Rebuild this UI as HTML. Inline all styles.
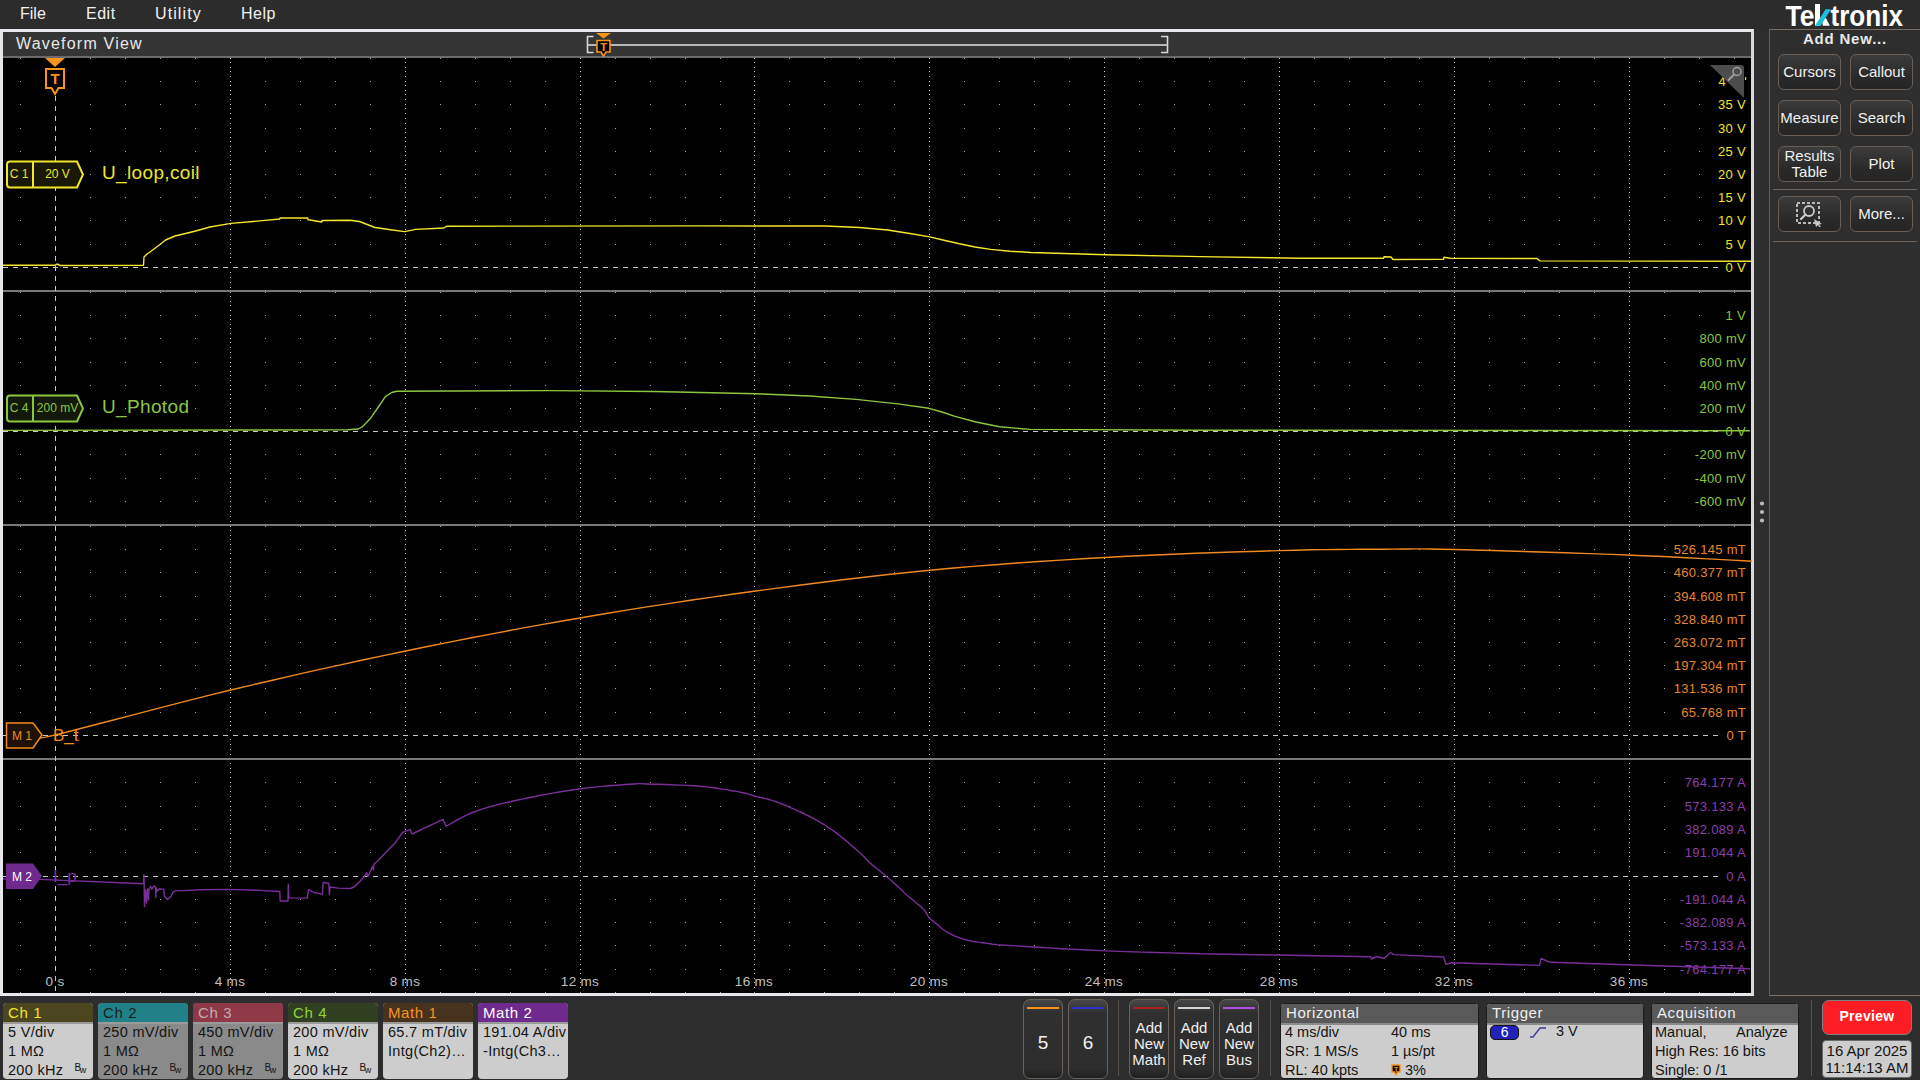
<!DOCTYPE html><html><head><meta charset="utf-8"><title>Tektronix</title><style>
*{margin:0;padding:0;box-sizing:border-box}
html,body{width:1920px;height:1080px;overflow:hidden;background:#2d2d2d;font-family:"Liberation Sans", sans-serif}
.a{position:absolute}
.menu{left:0;top:0;width:1920px;height:29px;background:#2c2c2c}
.mi{position:absolute;top:4px;font-size:16px;color:#f2f2f2;line-height:20px}
.win{left:0;top:29px;width:1754px;height:967px;border:3px solid #e8e8ec;border-right-color:#d8d8dc;background:#000}
.title{left:3px;top:32px;width:1748px;height:24px;background:#353535}
.tline{left:3px;top:56px;width:1748px;height:2px;background:#6b6b6b}
.panel{left:1769px;top:29px;width:151px;height:967px;background:#2e2e2e;border-left:1px solid #5e5e5e;border-top:1px solid #7a6e64;border-bottom:1px solid #7a6e64}
.btn{position:absolute;width:63px;height:36px;border:1px solid #6a5e54;border-radius:6px;background:linear-gradient(#3c3c3c,#2a2a2a 60%,#252525);color:#f0f0f0;font-size:15px;text-align:center;display:flex;align-items:center;justify-content:center;line-height:16px}
.sep{position:absolute;height:1px;background:#6e645c}
.bd{position:absolute;top:1003px;height:76px;border-radius:4px;overflow:hidden;background:#cdcdcd}
.bd .h{height:21px;font-size:15px;line-height:19px;padding-left:5px;border-bottom:2px solid #9a9a9a;letter-spacing:0.6px}
.ib .r{letter-spacing:0 !important}
.bd .r{font-size:14.5px;color:#141414;line-height:19px;padding-left:5px;white-space:nowrap;letter-spacing:0.3px;position:relative;top:-1px}
.sb{position:absolute;top:999px;width:40px;height:80px;border:1px solid #6a625a;border-radius:7px;background:linear-gradient(#474747 0,#2f2f2f 13px,#2d2d2d 88%,#1f1f1f 100%);color:#f0f0f0;text-align:center}
</style></head><body><div class="a menu"><span class="mi" style="left:20px">File</span><span class="mi" style="left:86px;letter-spacing:0.5px">Edit</span><span class="mi" style="left:155px;letter-spacing:1.1px">Utility</span><span class="mi" style="left:241px;letter-spacing:0.5px">Help</span></div><div class="a win"></div><div class="a title"></div><div class="a tline"></div><div class="a" style="left:16px;top:34px;font-size:16px;color:#e8e8e8;line-height:20px;letter-spacing:1.2px">Waveform View</div><svg class="a" style="left:0;top:0" width="1920" height="60"><path d="M593.5 36.5 H587.5 V52.5 H593.5" fill="none" stroke="#d8d8d8" stroke-width="1.6"/><path d="M1161 36.5 H1167.5 V52.5 H1161" fill="none" stroke="#d8d8d8" stroke-width="1.6"/><rect x="588" y="44" width="579" height="2" fill="#b8b8b8"/><path d="M596 33 H611 L603.5 38.5 Z" fill="#f7931e"/><path d="M597 40.5 H610 V52 H606 L603.5 56 L601 52 H597 Z" fill="#000" stroke="#f7931e" stroke-width="1.6"/><text x="603.5" y="50.5" fill="#f7931e" font-family='"Liberation Sans", sans-serif' font-size="11" font-weight="bold" text-anchor="middle">T</text></svg><svg width="1920" height="1080" style="position:absolute;left:0;top:0"><rect x="3" y="58" width="1748" height="935" fill="#000"/><path fill="#a8a8a8" d="M20 58h1v1h-1zM55 58h1v1h-1zM90 58h1v1h-1zM125 58h1v1h-1zM160 58h1v1h-1zM195 58h1v1h-1zM230 58h1v1h-1zM265 58h1v1h-1zM300 58h1v1h-1zM335 58h1v1h-1zM370 58h1v1h-1zM405 58h1v1h-1zM440 58h1v1h-1zM475 58h1v1h-1zM510 58h1v1h-1zM545 58h1v1h-1zM580 58h1v1h-1zM615 58h1v1h-1zM650 58h1v1h-1zM685 58h1v1h-1zM720 58h1v1h-1zM754 58h1v1h-1zM789 58h1v1h-1zM824 58h1v1h-1zM859 58h1v1h-1zM894 58h1v1h-1zM929 58h1v1h-1zM964 58h1v1h-1zM999 58h1v1h-1zM1034 58h1v1h-1zM1069 58h1v1h-1zM1104 58h1v1h-1zM1139 58h1v1h-1zM1174 58h1v1h-1zM1209 58h1v1h-1zM1244 58h1v1h-1zM1279 58h1v1h-1zM1314 58h1v1h-1zM1349 58h1v1h-1zM1384 58h1v1h-1zM1419 58h1v1h-1zM1454 58h1v1h-1zM1489 58h1v1h-1zM1524 58h1v1h-1zM1559 58h1v1h-1zM1594 58h1v1h-1zM1629 58h1v1h-1zM1664 58h1v1h-1zM1699 58h1v1h-1zM1734 58h1v1h-1zM20 81h1v1h-1zM55 81h1v1h-1zM90 81h1v1h-1zM125 81h1v1h-1zM160 81h1v1h-1zM195 81h1v1h-1zM230 81h1v1h-1zM265 81h1v1h-1zM300 81h1v1h-1zM335 81h1v1h-1zM370 81h1v1h-1zM405 81h1v1h-1zM440 81h1v1h-1zM475 81h1v1h-1zM510 81h1v1h-1zM545 81h1v1h-1zM580 81h1v1h-1zM615 81h1v1h-1zM650 81h1v1h-1zM685 81h1v1h-1zM720 81h1v1h-1zM754 81h1v1h-1zM789 81h1v1h-1zM824 81h1v1h-1zM859 81h1v1h-1zM894 81h1v1h-1zM929 81h1v1h-1zM964 81h1v1h-1zM999 81h1v1h-1zM1034 81h1v1h-1zM1069 81h1v1h-1zM1104 81h1v1h-1zM1139 81h1v1h-1zM1174 81h1v1h-1zM1209 81h1v1h-1zM1244 81h1v1h-1zM1279 81h1v1h-1zM1314 81h1v1h-1zM1349 81h1v1h-1zM1384 81h1v1h-1zM1419 81h1v1h-1zM1454 81h1v1h-1zM1489 81h1v1h-1zM1524 81h1v1h-1zM1559 81h1v1h-1zM1594 81h1v1h-1zM1629 81h1v1h-1zM1664 81h1v1h-1zM1699 81h1v1h-1zM1734 81h1v1h-1zM20 104h1v1h-1zM90 104h1v1h-1zM125 104h1v1h-1zM160 104h1v1h-1zM195 104h1v1h-1zM230 104h1v1h-1zM265 104h1v1h-1zM300 104h1v1h-1zM335 104h1v1h-1zM370 104h1v1h-1zM405 104h1v1h-1zM440 104h1v1h-1zM475 104h1v1h-1zM510 104h1v1h-1zM545 104h1v1h-1zM580 104h1v1h-1zM615 104h1v1h-1zM650 104h1v1h-1zM685 104h1v1h-1zM720 104h1v1h-1zM754 104h1v1h-1zM789 104h1v1h-1zM824 104h1v1h-1zM859 104h1v1h-1zM894 104h1v1h-1zM929 104h1v1h-1zM964 104h1v1h-1zM999 104h1v1h-1zM1034 104h1v1h-1zM1069 104h1v1h-1zM1104 104h1v1h-1zM1139 104h1v1h-1zM1174 104h1v1h-1zM1209 104h1v1h-1zM1244 104h1v1h-1zM1279 104h1v1h-1zM1314 104h1v1h-1zM1349 104h1v1h-1zM1384 104h1v1h-1zM1419 104h1v1h-1zM1454 104h1v1h-1zM1489 104h1v1h-1zM1524 104h1v1h-1zM1559 104h1v1h-1zM1594 104h1v1h-1zM1629 104h1v1h-1zM1664 104h1v1h-1zM1699 104h1v1h-1zM1734 104h1v1h-1zM20 128h1v1h-1zM90 128h1v1h-1zM125 128h1v1h-1zM160 128h1v1h-1zM195 128h1v1h-1zM230 128h1v1h-1zM265 128h1v1h-1zM300 128h1v1h-1zM335 128h1v1h-1zM370 128h1v1h-1zM405 128h1v1h-1zM440 128h1v1h-1zM475 128h1v1h-1zM510 128h1v1h-1zM545 128h1v1h-1zM580 128h1v1h-1zM615 128h1v1h-1zM650 128h1v1h-1zM685 128h1v1h-1zM720 128h1v1h-1zM754 128h1v1h-1zM789 128h1v1h-1zM824 128h1v1h-1zM859 128h1v1h-1zM894 128h1v1h-1zM929 128h1v1h-1zM964 128h1v1h-1zM999 128h1v1h-1zM1034 128h1v1h-1zM1069 128h1v1h-1zM1104 128h1v1h-1zM1139 128h1v1h-1zM1174 128h1v1h-1zM1209 128h1v1h-1zM1244 128h1v1h-1zM1279 128h1v1h-1zM1314 128h1v1h-1zM1349 128h1v1h-1zM1384 128h1v1h-1zM1419 128h1v1h-1zM1454 128h1v1h-1zM1489 128h1v1h-1zM1524 128h1v1h-1zM1559 128h1v1h-1zM1594 128h1v1h-1zM1629 128h1v1h-1zM1664 128h1v1h-1zM1699 128h1v1h-1zM1734 128h1v1h-1zM20 151h1v1h-1zM90 151h1v1h-1zM125 151h1v1h-1zM160 151h1v1h-1zM195 151h1v1h-1zM230 151h1v1h-1zM265 151h1v1h-1zM300 151h1v1h-1zM335 151h1v1h-1zM370 151h1v1h-1zM405 151h1v1h-1zM440 151h1v1h-1zM475 151h1v1h-1zM510 151h1v1h-1zM545 151h1v1h-1zM580 151h1v1h-1zM615 151h1v1h-1zM650 151h1v1h-1zM685 151h1v1h-1zM720 151h1v1h-1zM754 151h1v1h-1zM789 151h1v1h-1zM824 151h1v1h-1zM859 151h1v1h-1zM894 151h1v1h-1zM929 151h1v1h-1zM964 151h1v1h-1zM999 151h1v1h-1zM1034 151h1v1h-1zM1069 151h1v1h-1zM1104 151h1v1h-1zM1139 151h1v1h-1zM1174 151h1v1h-1zM1209 151h1v1h-1zM1244 151h1v1h-1zM1279 151h1v1h-1zM1314 151h1v1h-1zM1349 151h1v1h-1zM1384 151h1v1h-1zM1419 151h1v1h-1zM1454 151h1v1h-1zM1489 151h1v1h-1zM1524 151h1v1h-1zM1559 151h1v1h-1zM1594 151h1v1h-1zM1629 151h1v1h-1zM1664 151h1v1h-1zM1699 151h1v1h-1zM1734 151h1v1h-1zM20 174h1v1h-1zM90 174h1v1h-1zM125 174h1v1h-1zM160 174h1v1h-1zM195 174h1v1h-1zM230 174h1v1h-1zM265 174h1v1h-1zM300 174h1v1h-1zM335 174h1v1h-1zM370 174h1v1h-1zM405 174h1v1h-1zM440 174h1v1h-1zM475 174h1v1h-1zM510 174h1v1h-1zM545 174h1v1h-1zM580 174h1v1h-1zM615 174h1v1h-1zM650 174h1v1h-1zM685 174h1v1h-1zM720 174h1v1h-1zM754 174h1v1h-1zM789 174h1v1h-1zM824 174h1v1h-1zM859 174h1v1h-1zM894 174h1v1h-1zM929 174h1v1h-1zM964 174h1v1h-1zM999 174h1v1h-1zM1034 174h1v1h-1zM1069 174h1v1h-1zM1104 174h1v1h-1zM1139 174h1v1h-1zM1174 174h1v1h-1zM1209 174h1v1h-1zM1244 174h1v1h-1zM1279 174h1v1h-1zM1314 174h1v1h-1zM1349 174h1v1h-1zM1384 174h1v1h-1zM1419 174h1v1h-1zM1454 174h1v1h-1zM1489 174h1v1h-1zM1524 174h1v1h-1zM1559 174h1v1h-1zM1594 174h1v1h-1zM1629 174h1v1h-1zM1664 174h1v1h-1zM1699 174h1v1h-1zM1734 174h1v1h-1zM20 197h1v1h-1zM90 197h1v1h-1zM125 197h1v1h-1zM160 197h1v1h-1zM195 197h1v1h-1zM230 197h1v1h-1zM265 197h1v1h-1zM300 197h1v1h-1zM335 197h1v1h-1zM370 197h1v1h-1zM405 197h1v1h-1zM440 197h1v1h-1zM475 197h1v1h-1zM510 197h1v1h-1zM545 197h1v1h-1zM580 197h1v1h-1zM615 197h1v1h-1zM650 197h1v1h-1zM685 197h1v1h-1zM720 197h1v1h-1zM754 197h1v1h-1zM789 197h1v1h-1zM824 197h1v1h-1zM859 197h1v1h-1zM894 197h1v1h-1zM929 197h1v1h-1zM964 197h1v1h-1zM999 197h1v1h-1zM1034 197h1v1h-1zM1069 197h1v1h-1zM1104 197h1v1h-1zM1139 197h1v1h-1zM1174 197h1v1h-1zM1209 197h1v1h-1zM1244 197h1v1h-1zM1279 197h1v1h-1zM1314 197h1v1h-1zM1349 197h1v1h-1zM1384 197h1v1h-1zM1419 197h1v1h-1zM1454 197h1v1h-1zM1489 197h1v1h-1zM1524 197h1v1h-1zM1559 197h1v1h-1zM1594 197h1v1h-1zM1629 197h1v1h-1zM1664 197h1v1h-1zM1699 197h1v1h-1zM1734 197h1v1h-1zM20 220h1v1h-1zM90 220h1v1h-1zM125 220h1v1h-1zM160 220h1v1h-1zM195 220h1v1h-1zM230 220h1v1h-1zM265 220h1v1h-1zM300 220h1v1h-1zM335 220h1v1h-1zM370 220h1v1h-1zM405 220h1v1h-1zM440 220h1v1h-1zM475 220h1v1h-1zM510 220h1v1h-1zM545 220h1v1h-1zM580 220h1v1h-1zM615 220h1v1h-1zM650 220h1v1h-1zM685 220h1v1h-1zM720 220h1v1h-1zM754 220h1v1h-1zM789 220h1v1h-1zM824 220h1v1h-1zM859 220h1v1h-1zM894 220h1v1h-1zM929 220h1v1h-1zM964 220h1v1h-1zM999 220h1v1h-1zM1034 220h1v1h-1zM1069 220h1v1h-1zM1104 220h1v1h-1zM1139 220h1v1h-1zM1174 220h1v1h-1zM1209 220h1v1h-1zM1244 220h1v1h-1zM1279 220h1v1h-1zM1314 220h1v1h-1zM1349 220h1v1h-1zM1384 220h1v1h-1zM1419 220h1v1h-1zM1454 220h1v1h-1zM1489 220h1v1h-1zM1524 220h1v1h-1zM1559 220h1v1h-1zM1594 220h1v1h-1zM1629 220h1v1h-1zM1664 220h1v1h-1zM1699 220h1v1h-1zM1734 220h1v1h-1zM20 244h1v1h-1zM90 244h1v1h-1zM125 244h1v1h-1zM160 244h1v1h-1zM195 244h1v1h-1zM230 244h1v1h-1zM265 244h1v1h-1zM300 244h1v1h-1zM335 244h1v1h-1zM370 244h1v1h-1zM405 244h1v1h-1zM440 244h1v1h-1zM475 244h1v1h-1zM510 244h1v1h-1zM545 244h1v1h-1zM580 244h1v1h-1zM615 244h1v1h-1zM650 244h1v1h-1zM685 244h1v1h-1zM720 244h1v1h-1zM754 244h1v1h-1zM789 244h1v1h-1zM824 244h1v1h-1zM859 244h1v1h-1zM894 244h1v1h-1zM929 244h1v1h-1zM964 244h1v1h-1zM999 244h1v1h-1zM1034 244h1v1h-1zM1069 244h1v1h-1zM1104 244h1v1h-1zM1139 244h1v1h-1zM1174 244h1v1h-1zM1209 244h1v1h-1zM1244 244h1v1h-1zM1279 244h1v1h-1zM1314 244h1v1h-1zM1349 244h1v1h-1zM1384 244h1v1h-1zM1419 244h1v1h-1zM1454 244h1v1h-1zM1489 244h1v1h-1zM1524 244h1v1h-1zM1559 244h1v1h-1zM1594 244h1v1h-1zM1629 244h1v1h-1zM1664 244h1v1h-1zM1699 244h1v1h-1zM1734 244h1v1h-1zM20 292h1v1h-1zM90 292h1v1h-1zM125 292h1v1h-1zM160 292h1v1h-1zM195 292h1v1h-1zM230 292h1v1h-1zM265 292h1v1h-1zM300 292h1v1h-1zM335 292h1v1h-1zM370 292h1v1h-1zM405 292h1v1h-1zM440 292h1v1h-1zM475 292h1v1h-1zM510 292h1v1h-1zM545 292h1v1h-1zM580 292h1v1h-1zM615 292h1v1h-1zM650 292h1v1h-1zM685 292h1v1h-1zM720 292h1v1h-1zM754 292h1v1h-1zM789 292h1v1h-1zM824 292h1v1h-1zM859 292h1v1h-1zM894 292h1v1h-1zM929 292h1v1h-1zM964 292h1v1h-1zM999 292h1v1h-1zM1034 292h1v1h-1zM1069 292h1v1h-1zM1104 292h1v1h-1zM1139 292h1v1h-1zM1174 292h1v1h-1zM1209 292h1v1h-1zM1244 292h1v1h-1zM1279 292h1v1h-1zM1314 292h1v1h-1zM1349 292h1v1h-1zM1384 292h1v1h-1zM1419 292h1v1h-1zM1454 292h1v1h-1zM1489 292h1v1h-1zM1524 292h1v1h-1zM1559 292h1v1h-1zM1594 292h1v1h-1zM1629 292h1v1h-1zM1664 292h1v1h-1zM1699 292h1v1h-1zM1734 292h1v1h-1zM20 315h1v1h-1zM90 315h1v1h-1zM125 315h1v1h-1zM160 315h1v1h-1zM195 315h1v1h-1zM230 315h1v1h-1zM265 315h1v1h-1zM300 315h1v1h-1zM335 315h1v1h-1zM370 315h1v1h-1zM405 315h1v1h-1zM440 315h1v1h-1zM475 315h1v1h-1zM510 315h1v1h-1zM545 315h1v1h-1zM580 315h1v1h-1zM615 315h1v1h-1zM650 315h1v1h-1zM685 315h1v1h-1zM720 315h1v1h-1zM754 315h1v1h-1zM789 315h1v1h-1zM824 315h1v1h-1zM859 315h1v1h-1zM894 315h1v1h-1zM929 315h1v1h-1zM964 315h1v1h-1zM999 315h1v1h-1zM1034 315h1v1h-1zM1069 315h1v1h-1zM1104 315h1v1h-1zM1139 315h1v1h-1zM1174 315h1v1h-1zM1209 315h1v1h-1zM1244 315h1v1h-1zM1279 315h1v1h-1zM1314 315h1v1h-1zM1349 315h1v1h-1zM1384 315h1v1h-1zM1419 315h1v1h-1zM1454 315h1v1h-1zM1489 315h1v1h-1zM1524 315h1v1h-1zM1559 315h1v1h-1zM1594 315h1v1h-1zM1629 315h1v1h-1zM1664 315h1v1h-1zM1699 315h1v1h-1zM1734 315h1v1h-1zM20 338h1v1h-1zM90 338h1v1h-1zM125 338h1v1h-1zM160 338h1v1h-1zM195 338h1v1h-1zM230 338h1v1h-1zM265 338h1v1h-1zM300 338h1v1h-1zM335 338h1v1h-1zM370 338h1v1h-1zM405 338h1v1h-1zM440 338h1v1h-1zM475 338h1v1h-1zM510 338h1v1h-1zM545 338h1v1h-1zM580 338h1v1h-1zM615 338h1v1h-1zM650 338h1v1h-1zM685 338h1v1h-1zM720 338h1v1h-1zM754 338h1v1h-1zM789 338h1v1h-1zM824 338h1v1h-1zM859 338h1v1h-1zM894 338h1v1h-1zM929 338h1v1h-1zM964 338h1v1h-1zM999 338h1v1h-1zM1034 338h1v1h-1zM1069 338h1v1h-1zM1104 338h1v1h-1zM1139 338h1v1h-1zM1174 338h1v1h-1zM1209 338h1v1h-1zM1244 338h1v1h-1zM1279 338h1v1h-1zM1314 338h1v1h-1zM1349 338h1v1h-1zM1384 338h1v1h-1zM1419 338h1v1h-1zM1454 338h1v1h-1zM1489 338h1v1h-1zM1524 338h1v1h-1zM1559 338h1v1h-1zM1594 338h1v1h-1zM1629 338h1v1h-1zM1664 338h1v1h-1zM1699 338h1v1h-1zM1734 338h1v1h-1zM20 362h1v1h-1zM90 362h1v1h-1zM125 362h1v1h-1zM160 362h1v1h-1zM195 362h1v1h-1zM230 362h1v1h-1zM265 362h1v1h-1zM300 362h1v1h-1zM335 362h1v1h-1zM370 362h1v1h-1zM405 362h1v1h-1zM440 362h1v1h-1zM475 362h1v1h-1zM510 362h1v1h-1zM545 362h1v1h-1zM580 362h1v1h-1zM615 362h1v1h-1zM650 362h1v1h-1zM685 362h1v1h-1zM720 362h1v1h-1zM754 362h1v1h-1zM789 362h1v1h-1zM824 362h1v1h-1zM859 362h1v1h-1zM894 362h1v1h-1zM929 362h1v1h-1zM964 362h1v1h-1zM999 362h1v1h-1zM1034 362h1v1h-1zM1069 362h1v1h-1zM1104 362h1v1h-1zM1139 362h1v1h-1zM1174 362h1v1h-1zM1209 362h1v1h-1zM1244 362h1v1h-1zM1279 362h1v1h-1zM1314 362h1v1h-1zM1349 362h1v1h-1zM1384 362h1v1h-1zM1419 362h1v1h-1zM1454 362h1v1h-1zM1489 362h1v1h-1zM1524 362h1v1h-1zM1559 362h1v1h-1zM1594 362h1v1h-1zM1629 362h1v1h-1zM1664 362h1v1h-1zM1699 362h1v1h-1zM1734 362h1v1h-1zM20 385h1v1h-1zM90 385h1v1h-1zM125 385h1v1h-1zM160 385h1v1h-1zM195 385h1v1h-1zM230 385h1v1h-1zM265 385h1v1h-1zM300 385h1v1h-1zM335 385h1v1h-1zM370 385h1v1h-1zM405 385h1v1h-1zM440 385h1v1h-1zM475 385h1v1h-1zM510 385h1v1h-1zM545 385h1v1h-1zM580 385h1v1h-1zM615 385h1v1h-1zM650 385h1v1h-1zM685 385h1v1h-1zM720 385h1v1h-1zM754 385h1v1h-1zM789 385h1v1h-1zM824 385h1v1h-1zM859 385h1v1h-1zM894 385h1v1h-1zM929 385h1v1h-1zM964 385h1v1h-1zM999 385h1v1h-1zM1034 385h1v1h-1zM1069 385h1v1h-1zM1104 385h1v1h-1zM1139 385h1v1h-1zM1174 385h1v1h-1zM1209 385h1v1h-1zM1244 385h1v1h-1zM1279 385h1v1h-1zM1314 385h1v1h-1zM1349 385h1v1h-1zM1384 385h1v1h-1zM1419 385h1v1h-1zM1454 385h1v1h-1zM1489 385h1v1h-1zM1524 385h1v1h-1zM1559 385h1v1h-1zM1594 385h1v1h-1zM1629 385h1v1h-1zM1664 385h1v1h-1zM1699 385h1v1h-1zM1734 385h1v1h-1zM20 408h1v1h-1zM90 408h1v1h-1zM125 408h1v1h-1zM160 408h1v1h-1zM195 408h1v1h-1zM230 408h1v1h-1zM265 408h1v1h-1zM300 408h1v1h-1zM335 408h1v1h-1zM370 408h1v1h-1zM405 408h1v1h-1zM440 408h1v1h-1zM475 408h1v1h-1zM510 408h1v1h-1zM545 408h1v1h-1zM580 408h1v1h-1zM615 408h1v1h-1zM650 408h1v1h-1zM685 408h1v1h-1zM720 408h1v1h-1zM754 408h1v1h-1zM789 408h1v1h-1zM824 408h1v1h-1zM859 408h1v1h-1zM894 408h1v1h-1zM929 408h1v1h-1zM964 408h1v1h-1zM999 408h1v1h-1zM1034 408h1v1h-1zM1069 408h1v1h-1zM1104 408h1v1h-1zM1139 408h1v1h-1zM1174 408h1v1h-1zM1209 408h1v1h-1zM1244 408h1v1h-1zM1279 408h1v1h-1zM1314 408h1v1h-1zM1349 408h1v1h-1zM1384 408h1v1h-1zM1419 408h1v1h-1zM1454 408h1v1h-1zM1489 408h1v1h-1zM1524 408h1v1h-1zM1559 408h1v1h-1zM1594 408h1v1h-1zM1629 408h1v1h-1zM1664 408h1v1h-1zM1699 408h1v1h-1zM1734 408h1v1h-1zM20 454h1v1h-1zM90 454h1v1h-1zM125 454h1v1h-1zM160 454h1v1h-1zM195 454h1v1h-1zM230 454h1v1h-1zM265 454h1v1h-1zM300 454h1v1h-1zM335 454h1v1h-1zM370 454h1v1h-1zM405 454h1v1h-1zM440 454h1v1h-1zM475 454h1v1h-1zM510 454h1v1h-1zM545 454h1v1h-1zM580 454h1v1h-1zM615 454h1v1h-1zM650 454h1v1h-1zM685 454h1v1h-1zM720 454h1v1h-1zM754 454h1v1h-1zM789 454h1v1h-1zM824 454h1v1h-1zM859 454h1v1h-1zM894 454h1v1h-1zM929 454h1v1h-1zM964 454h1v1h-1zM999 454h1v1h-1zM1034 454h1v1h-1zM1069 454h1v1h-1zM1104 454h1v1h-1zM1139 454h1v1h-1zM1174 454h1v1h-1zM1209 454h1v1h-1zM1244 454h1v1h-1zM1279 454h1v1h-1zM1314 454h1v1h-1zM1349 454h1v1h-1zM1384 454h1v1h-1zM1419 454h1v1h-1zM1454 454h1v1h-1zM1489 454h1v1h-1zM1524 454h1v1h-1zM1559 454h1v1h-1zM1594 454h1v1h-1zM1629 454h1v1h-1zM1664 454h1v1h-1zM1699 454h1v1h-1zM1734 454h1v1h-1zM20 478h1v1h-1zM90 478h1v1h-1zM125 478h1v1h-1zM160 478h1v1h-1zM195 478h1v1h-1zM230 478h1v1h-1zM265 478h1v1h-1zM300 478h1v1h-1zM335 478h1v1h-1zM370 478h1v1h-1zM405 478h1v1h-1zM440 478h1v1h-1zM475 478h1v1h-1zM510 478h1v1h-1zM545 478h1v1h-1zM580 478h1v1h-1zM615 478h1v1h-1zM650 478h1v1h-1zM685 478h1v1h-1zM720 478h1v1h-1zM754 478h1v1h-1zM789 478h1v1h-1zM824 478h1v1h-1zM859 478h1v1h-1zM894 478h1v1h-1zM929 478h1v1h-1zM964 478h1v1h-1zM999 478h1v1h-1zM1034 478h1v1h-1zM1069 478h1v1h-1zM1104 478h1v1h-1zM1139 478h1v1h-1zM1174 478h1v1h-1zM1209 478h1v1h-1zM1244 478h1v1h-1zM1279 478h1v1h-1zM1314 478h1v1h-1zM1349 478h1v1h-1zM1384 478h1v1h-1zM1419 478h1v1h-1zM1454 478h1v1h-1zM1489 478h1v1h-1zM1524 478h1v1h-1zM1559 478h1v1h-1zM1594 478h1v1h-1zM1629 478h1v1h-1zM1664 478h1v1h-1zM1699 478h1v1h-1zM1734 478h1v1h-1zM20 501h1v1h-1zM90 501h1v1h-1zM125 501h1v1h-1zM160 501h1v1h-1zM195 501h1v1h-1zM230 501h1v1h-1zM265 501h1v1h-1zM300 501h1v1h-1zM335 501h1v1h-1zM370 501h1v1h-1zM405 501h1v1h-1zM440 501h1v1h-1zM475 501h1v1h-1zM510 501h1v1h-1zM545 501h1v1h-1zM580 501h1v1h-1zM615 501h1v1h-1zM650 501h1v1h-1zM685 501h1v1h-1zM720 501h1v1h-1zM754 501h1v1h-1zM789 501h1v1h-1zM824 501h1v1h-1zM859 501h1v1h-1zM894 501h1v1h-1zM929 501h1v1h-1zM964 501h1v1h-1zM999 501h1v1h-1zM1034 501h1v1h-1zM1069 501h1v1h-1zM1104 501h1v1h-1zM1139 501h1v1h-1zM1174 501h1v1h-1zM1209 501h1v1h-1zM1244 501h1v1h-1zM1279 501h1v1h-1zM1314 501h1v1h-1zM1349 501h1v1h-1zM1384 501h1v1h-1zM1419 501h1v1h-1zM1454 501h1v1h-1zM1489 501h1v1h-1zM1524 501h1v1h-1zM1559 501h1v1h-1zM1594 501h1v1h-1zM1629 501h1v1h-1zM1664 501h1v1h-1zM1699 501h1v1h-1zM1734 501h1v1h-1zM20 526h1v1h-1zM90 526h1v1h-1zM125 526h1v1h-1zM160 526h1v1h-1zM195 526h1v1h-1zM230 526h1v1h-1zM265 526h1v1h-1zM300 526h1v1h-1zM335 526h1v1h-1zM370 526h1v1h-1zM405 526h1v1h-1zM440 526h1v1h-1zM475 526h1v1h-1zM510 526h1v1h-1zM545 526h1v1h-1zM580 526h1v1h-1zM615 526h1v1h-1zM650 526h1v1h-1zM685 526h1v1h-1zM720 526h1v1h-1zM754 526h1v1h-1zM789 526h1v1h-1zM824 526h1v1h-1zM859 526h1v1h-1zM894 526h1v1h-1zM929 526h1v1h-1zM964 526h1v1h-1zM999 526h1v1h-1zM1034 526h1v1h-1zM1069 526h1v1h-1zM1104 526h1v1h-1zM1139 526h1v1h-1zM1174 526h1v1h-1zM1209 526h1v1h-1zM1244 526h1v1h-1zM1279 526h1v1h-1zM1314 526h1v1h-1zM1349 526h1v1h-1zM1384 526h1v1h-1zM1419 526h1v1h-1zM1454 526h1v1h-1zM1489 526h1v1h-1zM1524 526h1v1h-1zM1559 526h1v1h-1zM1594 526h1v1h-1zM1629 526h1v1h-1zM1664 526h1v1h-1zM1699 526h1v1h-1zM1734 526h1v1h-1zM20 549h1v1h-1zM90 549h1v1h-1zM125 549h1v1h-1zM160 549h1v1h-1zM195 549h1v1h-1zM230 549h1v1h-1zM265 549h1v1h-1zM300 549h1v1h-1zM335 549h1v1h-1zM370 549h1v1h-1zM405 549h1v1h-1zM440 549h1v1h-1zM475 549h1v1h-1zM510 549h1v1h-1zM545 549h1v1h-1zM580 549h1v1h-1zM615 549h1v1h-1zM650 549h1v1h-1zM685 549h1v1h-1zM720 549h1v1h-1zM754 549h1v1h-1zM789 549h1v1h-1zM824 549h1v1h-1zM859 549h1v1h-1zM894 549h1v1h-1zM929 549h1v1h-1zM964 549h1v1h-1zM999 549h1v1h-1zM1034 549h1v1h-1zM1069 549h1v1h-1zM1104 549h1v1h-1zM1139 549h1v1h-1zM1174 549h1v1h-1zM1209 549h1v1h-1zM1244 549h1v1h-1zM1279 549h1v1h-1zM1314 549h1v1h-1zM1349 549h1v1h-1zM1384 549h1v1h-1zM1419 549h1v1h-1zM1454 549h1v1h-1zM1489 549h1v1h-1zM1524 549h1v1h-1zM1559 549h1v1h-1zM1594 549h1v1h-1zM1629 549h1v1h-1zM1664 549h1v1h-1zM1699 549h1v1h-1zM1734 549h1v1h-1zM20 572h1v1h-1zM90 572h1v1h-1zM125 572h1v1h-1zM160 572h1v1h-1zM195 572h1v1h-1zM230 572h1v1h-1zM265 572h1v1h-1zM300 572h1v1h-1zM335 572h1v1h-1zM370 572h1v1h-1zM405 572h1v1h-1zM440 572h1v1h-1zM475 572h1v1h-1zM510 572h1v1h-1zM545 572h1v1h-1zM580 572h1v1h-1zM615 572h1v1h-1zM650 572h1v1h-1zM685 572h1v1h-1zM720 572h1v1h-1zM754 572h1v1h-1zM789 572h1v1h-1zM824 572h1v1h-1zM859 572h1v1h-1zM894 572h1v1h-1zM929 572h1v1h-1zM964 572h1v1h-1zM999 572h1v1h-1zM1034 572h1v1h-1zM1069 572h1v1h-1zM1104 572h1v1h-1zM1139 572h1v1h-1zM1174 572h1v1h-1zM1209 572h1v1h-1zM1244 572h1v1h-1zM1279 572h1v1h-1zM1314 572h1v1h-1zM1349 572h1v1h-1zM1384 572h1v1h-1zM1419 572h1v1h-1zM1454 572h1v1h-1zM1489 572h1v1h-1zM1524 572h1v1h-1zM1559 572h1v1h-1zM1594 572h1v1h-1zM1629 572h1v1h-1zM1664 572h1v1h-1zM1699 572h1v1h-1zM1734 572h1v1h-1zM20 596h1v1h-1zM90 596h1v1h-1zM125 596h1v1h-1zM160 596h1v1h-1zM195 596h1v1h-1zM230 596h1v1h-1zM265 596h1v1h-1zM300 596h1v1h-1zM335 596h1v1h-1zM370 596h1v1h-1zM405 596h1v1h-1zM440 596h1v1h-1zM475 596h1v1h-1zM510 596h1v1h-1zM545 596h1v1h-1zM580 596h1v1h-1zM615 596h1v1h-1zM650 596h1v1h-1zM685 596h1v1h-1zM720 596h1v1h-1zM754 596h1v1h-1zM789 596h1v1h-1zM824 596h1v1h-1zM859 596h1v1h-1zM894 596h1v1h-1zM929 596h1v1h-1zM964 596h1v1h-1zM999 596h1v1h-1zM1034 596h1v1h-1zM1069 596h1v1h-1zM1104 596h1v1h-1zM1139 596h1v1h-1zM1174 596h1v1h-1zM1209 596h1v1h-1zM1244 596h1v1h-1zM1279 596h1v1h-1zM1314 596h1v1h-1zM1349 596h1v1h-1zM1384 596h1v1h-1zM1419 596h1v1h-1zM1454 596h1v1h-1zM1489 596h1v1h-1zM1524 596h1v1h-1zM1559 596h1v1h-1zM1594 596h1v1h-1zM1629 596h1v1h-1zM1664 596h1v1h-1zM1699 596h1v1h-1zM1734 596h1v1h-1zM20 619h1v1h-1zM90 619h1v1h-1zM125 619h1v1h-1zM160 619h1v1h-1zM195 619h1v1h-1zM230 619h1v1h-1zM265 619h1v1h-1zM300 619h1v1h-1zM335 619h1v1h-1zM370 619h1v1h-1zM405 619h1v1h-1zM440 619h1v1h-1zM475 619h1v1h-1zM510 619h1v1h-1zM545 619h1v1h-1zM580 619h1v1h-1zM615 619h1v1h-1zM650 619h1v1h-1zM685 619h1v1h-1zM720 619h1v1h-1zM754 619h1v1h-1zM789 619h1v1h-1zM824 619h1v1h-1zM859 619h1v1h-1zM894 619h1v1h-1zM929 619h1v1h-1zM964 619h1v1h-1zM999 619h1v1h-1zM1034 619h1v1h-1zM1069 619h1v1h-1zM1104 619h1v1h-1zM1139 619h1v1h-1zM1174 619h1v1h-1zM1209 619h1v1h-1zM1244 619h1v1h-1zM1279 619h1v1h-1zM1314 619h1v1h-1zM1349 619h1v1h-1zM1384 619h1v1h-1zM1419 619h1v1h-1zM1454 619h1v1h-1zM1489 619h1v1h-1zM1524 619h1v1h-1zM1559 619h1v1h-1zM1594 619h1v1h-1zM1629 619h1v1h-1zM1664 619h1v1h-1zM1699 619h1v1h-1zM1734 619h1v1h-1zM20 642h1v1h-1zM90 642h1v1h-1zM125 642h1v1h-1zM160 642h1v1h-1zM195 642h1v1h-1zM230 642h1v1h-1zM265 642h1v1h-1zM300 642h1v1h-1zM335 642h1v1h-1zM370 642h1v1h-1zM405 642h1v1h-1zM440 642h1v1h-1zM475 642h1v1h-1zM510 642h1v1h-1zM545 642h1v1h-1zM580 642h1v1h-1zM615 642h1v1h-1zM650 642h1v1h-1zM685 642h1v1h-1zM720 642h1v1h-1zM754 642h1v1h-1zM789 642h1v1h-1zM824 642h1v1h-1zM859 642h1v1h-1zM894 642h1v1h-1zM929 642h1v1h-1zM964 642h1v1h-1zM999 642h1v1h-1zM1034 642h1v1h-1zM1069 642h1v1h-1zM1104 642h1v1h-1zM1139 642h1v1h-1zM1174 642h1v1h-1zM1209 642h1v1h-1zM1244 642h1v1h-1zM1279 642h1v1h-1zM1314 642h1v1h-1zM1349 642h1v1h-1zM1384 642h1v1h-1zM1419 642h1v1h-1zM1454 642h1v1h-1zM1489 642h1v1h-1zM1524 642h1v1h-1zM1559 642h1v1h-1zM1594 642h1v1h-1zM1629 642h1v1h-1zM1664 642h1v1h-1zM1699 642h1v1h-1zM1734 642h1v1h-1zM20 665h1v1h-1zM90 665h1v1h-1zM125 665h1v1h-1zM160 665h1v1h-1zM195 665h1v1h-1zM230 665h1v1h-1zM265 665h1v1h-1zM300 665h1v1h-1zM335 665h1v1h-1zM370 665h1v1h-1zM405 665h1v1h-1zM440 665h1v1h-1zM475 665h1v1h-1zM510 665h1v1h-1zM545 665h1v1h-1zM580 665h1v1h-1zM615 665h1v1h-1zM650 665h1v1h-1zM685 665h1v1h-1zM720 665h1v1h-1zM754 665h1v1h-1zM789 665h1v1h-1zM824 665h1v1h-1zM859 665h1v1h-1zM894 665h1v1h-1zM929 665h1v1h-1zM964 665h1v1h-1zM999 665h1v1h-1zM1034 665h1v1h-1zM1069 665h1v1h-1zM1104 665h1v1h-1zM1139 665h1v1h-1zM1174 665h1v1h-1zM1209 665h1v1h-1zM1244 665h1v1h-1zM1279 665h1v1h-1zM1314 665h1v1h-1zM1349 665h1v1h-1zM1384 665h1v1h-1zM1419 665h1v1h-1zM1454 665h1v1h-1zM1489 665h1v1h-1zM1524 665h1v1h-1zM1559 665h1v1h-1zM1594 665h1v1h-1zM1629 665h1v1h-1zM1664 665h1v1h-1zM1699 665h1v1h-1zM1734 665h1v1h-1zM20 688h1v1h-1zM90 688h1v1h-1zM125 688h1v1h-1zM160 688h1v1h-1zM195 688h1v1h-1zM230 688h1v1h-1zM265 688h1v1h-1zM300 688h1v1h-1zM335 688h1v1h-1zM370 688h1v1h-1zM405 688h1v1h-1zM440 688h1v1h-1zM475 688h1v1h-1zM510 688h1v1h-1zM545 688h1v1h-1zM580 688h1v1h-1zM615 688h1v1h-1zM650 688h1v1h-1zM685 688h1v1h-1zM720 688h1v1h-1zM754 688h1v1h-1zM789 688h1v1h-1zM824 688h1v1h-1zM859 688h1v1h-1zM894 688h1v1h-1zM929 688h1v1h-1zM964 688h1v1h-1zM999 688h1v1h-1zM1034 688h1v1h-1zM1069 688h1v1h-1zM1104 688h1v1h-1zM1139 688h1v1h-1zM1174 688h1v1h-1zM1209 688h1v1h-1zM1244 688h1v1h-1zM1279 688h1v1h-1zM1314 688h1v1h-1zM1349 688h1v1h-1zM1384 688h1v1h-1zM1419 688h1v1h-1zM1454 688h1v1h-1zM1489 688h1v1h-1zM1524 688h1v1h-1zM1559 688h1v1h-1zM1594 688h1v1h-1zM1629 688h1v1h-1zM1664 688h1v1h-1zM1699 688h1v1h-1zM1734 688h1v1h-1zM20 712h1v1h-1zM90 712h1v1h-1zM125 712h1v1h-1zM160 712h1v1h-1zM195 712h1v1h-1zM230 712h1v1h-1zM265 712h1v1h-1zM300 712h1v1h-1zM335 712h1v1h-1zM370 712h1v1h-1zM405 712h1v1h-1zM440 712h1v1h-1zM475 712h1v1h-1zM510 712h1v1h-1zM545 712h1v1h-1zM580 712h1v1h-1zM615 712h1v1h-1zM650 712h1v1h-1zM685 712h1v1h-1zM720 712h1v1h-1zM754 712h1v1h-1zM789 712h1v1h-1zM824 712h1v1h-1zM859 712h1v1h-1zM894 712h1v1h-1zM929 712h1v1h-1zM964 712h1v1h-1zM999 712h1v1h-1zM1034 712h1v1h-1zM1069 712h1v1h-1zM1104 712h1v1h-1zM1139 712h1v1h-1zM1174 712h1v1h-1zM1209 712h1v1h-1zM1244 712h1v1h-1zM1279 712h1v1h-1zM1314 712h1v1h-1zM1349 712h1v1h-1zM1384 712h1v1h-1zM1419 712h1v1h-1zM1454 712h1v1h-1zM1489 712h1v1h-1zM1524 712h1v1h-1zM1559 712h1v1h-1zM1594 712h1v1h-1zM1629 712h1v1h-1zM1664 712h1v1h-1zM1699 712h1v1h-1zM1734 712h1v1h-1zM20 782h1v1h-1zM90 782h1v1h-1zM125 782h1v1h-1zM160 782h1v1h-1zM195 782h1v1h-1zM230 782h1v1h-1zM265 782h1v1h-1zM300 782h1v1h-1zM335 782h1v1h-1zM370 782h1v1h-1zM405 782h1v1h-1zM440 782h1v1h-1zM475 782h1v1h-1zM510 782h1v1h-1zM545 782h1v1h-1zM580 782h1v1h-1zM615 782h1v1h-1zM650 782h1v1h-1zM685 782h1v1h-1zM720 782h1v1h-1zM754 782h1v1h-1zM789 782h1v1h-1zM824 782h1v1h-1zM859 782h1v1h-1zM894 782h1v1h-1zM929 782h1v1h-1zM964 782h1v1h-1zM999 782h1v1h-1zM1034 782h1v1h-1zM1069 782h1v1h-1zM1104 782h1v1h-1zM1139 782h1v1h-1zM1174 782h1v1h-1zM1209 782h1v1h-1zM1244 782h1v1h-1zM1279 782h1v1h-1zM1314 782h1v1h-1zM1349 782h1v1h-1zM1384 782h1v1h-1zM1419 782h1v1h-1zM1454 782h1v1h-1zM1489 782h1v1h-1zM1524 782h1v1h-1zM1559 782h1v1h-1zM1594 782h1v1h-1zM1629 782h1v1h-1zM1664 782h1v1h-1zM1699 782h1v1h-1zM1734 782h1v1h-1zM20 806h1v1h-1zM90 806h1v1h-1zM125 806h1v1h-1zM160 806h1v1h-1zM195 806h1v1h-1zM230 806h1v1h-1zM265 806h1v1h-1zM300 806h1v1h-1zM335 806h1v1h-1zM370 806h1v1h-1zM405 806h1v1h-1zM440 806h1v1h-1zM475 806h1v1h-1zM510 806h1v1h-1zM545 806h1v1h-1zM580 806h1v1h-1zM615 806h1v1h-1zM650 806h1v1h-1zM685 806h1v1h-1zM720 806h1v1h-1zM754 806h1v1h-1zM789 806h1v1h-1zM824 806h1v1h-1zM859 806h1v1h-1zM894 806h1v1h-1zM929 806h1v1h-1zM964 806h1v1h-1zM999 806h1v1h-1zM1034 806h1v1h-1zM1069 806h1v1h-1zM1104 806h1v1h-1zM1139 806h1v1h-1zM1174 806h1v1h-1zM1209 806h1v1h-1zM1244 806h1v1h-1zM1279 806h1v1h-1zM1314 806h1v1h-1zM1349 806h1v1h-1zM1384 806h1v1h-1zM1419 806h1v1h-1zM1454 806h1v1h-1zM1489 806h1v1h-1zM1524 806h1v1h-1zM1559 806h1v1h-1zM1594 806h1v1h-1zM1629 806h1v1h-1zM1664 806h1v1h-1zM1699 806h1v1h-1zM1734 806h1v1h-1zM20 829h1v1h-1zM90 829h1v1h-1zM125 829h1v1h-1zM160 829h1v1h-1zM195 829h1v1h-1zM230 829h1v1h-1zM265 829h1v1h-1zM300 829h1v1h-1zM335 829h1v1h-1zM370 829h1v1h-1zM405 829h1v1h-1zM440 829h1v1h-1zM475 829h1v1h-1zM510 829h1v1h-1zM545 829h1v1h-1zM580 829h1v1h-1zM615 829h1v1h-1zM650 829h1v1h-1zM685 829h1v1h-1zM720 829h1v1h-1zM754 829h1v1h-1zM789 829h1v1h-1zM824 829h1v1h-1zM859 829h1v1h-1zM894 829h1v1h-1zM929 829h1v1h-1zM964 829h1v1h-1zM999 829h1v1h-1zM1034 829h1v1h-1zM1069 829h1v1h-1zM1104 829h1v1h-1zM1139 829h1v1h-1zM1174 829h1v1h-1zM1209 829h1v1h-1zM1244 829h1v1h-1zM1279 829h1v1h-1zM1314 829h1v1h-1zM1349 829h1v1h-1zM1384 829h1v1h-1zM1419 829h1v1h-1zM1454 829h1v1h-1zM1489 829h1v1h-1zM1524 829h1v1h-1zM1559 829h1v1h-1zM1594 829h1v1h-1zM1629 829h1v1h-1zM1664 829h1v1h-1zM1699 829h1v1h-1zM1734 829h1v1h-1zM20 852h1v1h-1zM90 852h1v1h-1zM125 852h1v1h-1zM160 852h1v1h-1zM195 852h1v1h-1zM230 852h1v1h-1zM265 852h1v1h-1zM300 852h1v1h-1zM335 852h1v1h-1zM370 852h1v1h-1zM405 852h1v1h-1zM440 852h1v1h-1zM475 852h1v1h-1zM510 852h1v1h-1zM545 852h1v1h-1zM580 852h1v1h-1zM615 852h1v1h-1zM650 852h1v1h-1zM685 852h1v1h-1zM720 852h1v1h-1zM754 852h1v1h-1zM789 852h1v1h-1zM824 852h1v1h-1zM859 852h1v1h-1zM894 852h1v1h-1zM929 852h1v1h-1zM964 852h1v1h-1zM999 852h1v1h-1zM1034 852h1v1h-1zM1069 852h1v1h-1zM1104 852h1v1h-1zM1139 852h1v1h-1zM1174 852h1v1h-1zM1209 852h1v1h-1zM1244 852h1v1h-1zM1279 852h1v1h-1zM1314 852h1v1h-1zM1349 852h1v1h-1zM1384 852h1v1h-1zM1419 852h1v1h-1zM1454 852h1v1h-1zM1489 852h1v1h-1zM1524 852h1v1h-1zM1559 852h1v1h-1zM1594 852h1v1h-1zM1629 852h1v1h-1zM1664 852h1v1h-1zM1699 852h1v1h-1zM1734 852h1v1h-1zM20 899h1v1h-1zM90 899h1v1h-1zM125 899h1v1h-1zM160 899h1v1h-1zM195 899h1v1h-1zM230 899h1v1h-1zM265 899h1v1h-1zM300 899h1v1h-1zM335 899h1v1h-1zM370 899h1v1h-1zM405 899h1v1h-1zM440 899h1v1h-1zM475 899h1v1h-1zM510 899h1v1h-1zM545 899h1v1h-1zM580 899h1v1h-1zM615 899h1v1h-1zM650 899h1v1h-1zM685 899h1v1h-1zM720 899h1v1h-1zM754 899h1v1h-1zM789 899h1v1h-1zM824 899h1v1h-1zM859 899h1v1h-1zM894 899h1v1h-1zM929 899h1v1h-1zM964 899h1v1h-1zM999 899h1v1h-1zM1034 899h1v1h-1zM1069 899h1v1h-1zM1104 899h1v1h-1zM1139 899h1v1h-1zM1174 899h1v1h-1zM1209 899h1v1h-1zM1244 899h1v1h-1zM1279 899h1v1h-1zM1314 899h1v1h-1zM1349 899h1v1h-1zM1384 899h1v1h-1zM1419 899h1v1h-1zM1454 899h1v1h-1zM1489 899h1v1h-1zM1524 899h1v1h-1zM1559 899h1v1h-1zM1594 899h1v1h-1zM1629 899h1v1h-1zM1664 899h1v1h-1zM1699 899h1v1h-1zM1734 899h1v1h-1zM20 922h1v1h-1zM90 922h1v1h-1zM125 922h1v1h-1zM160 922h1v1h-1zM195 922h1v1h-1zM230 922h1v1h-1zM265 922h1v1h-1zM300 922h1v1h-1zM335 922h1v1h-1zM370 922h1v1h-1zM405 922h1v1h-1zM440 922h1v1h-1zM475 922h1v1h-1zM510 922h1v1h-1zM545 922h1v1h-1zM580 922h1v1h-1zM615 922h1v1h-1zM650 922h1v1h-1zM685 922h1v1h-1zM720 922h1v1h-1zM754 922h1v1h-1zM789 922h1v1h-1zM824 922h1v1h-1zM859 922h1v1h-1zM894 922h1v1h-1zM929 922h1v1h-1zM964 922h1v1h-1zM999 922h1v1h-1zM1034 922h1v1h-1zM1069 922h1v1h-1zM1104 922h1v1h-1zM1139 922h1v1h-1zM1174 922h1v1h-1zM1209 922h1v1h-1zM1244 922h1v1h-1zM1279 922h1v1h-1zM1314 922h1v1h-1zM1349 922h1v1h-1zM1384 922h1v1h-1zM1419 922h1v1h-1zM1454 922h1v1h-1zM1489 922h1v1h-1zM1524 922h1v1h-1zM1559 922h1v1h-1zM1594 922h1v1h-1zM1629 922h1v1h-1zM1664 922h1v1h-1zM1699 922h1v1h-1zM1734 922h1v1h-1zM20 945h1v1h-1zM90 945h1v1h-1zM125 945h1v1h-1zM160 945h1v1h-1zM195 945h1v1h-1zM230 945h1v1h-1zM265 945h1v1h-1zM300 945h1v1h-1zM335 945h1v1h-1zM370 945h1v1h-1zM405 945h1v1h-1zM440 945h1v1h-1zM475 945h1v1h-1zM510 945h1v1h-1zM545 945h1v1h-1zM580 945h1v1h-1zM615 945h1v1h-1zM650 945h1v1h-1zM685 945h1v1h-1zM720 945h1v1h-1zM754 945h1v1h-1zM789 945h1v1h-1zM824 945h1v1h-1zM859 945h1v1h-1zM894 945h1v1h-1zM929 945h1v1h-1zM964 945h1v1h-1zM999 945h1v1h-1zM1034 945h1v1h-1zM1069 945h1v1h-1zM1104 945h1v1h-1zM1139 945h1v1h-1zM1174 945h1v1h-1zM1209 945h1v1h-1zM1244 945h1v1h-1zM1279 945h1v1h-1zM1314 945h1v1h-1zM1349 945h1v1h-1zM1384 945h1v1h-1zM1419 945h1v1h-1zM1454 945h1v1h-1zM1489 945h1v1h-1zM1524 945h1v1h-1zM1559 945h1v1h-1zM1594 945h1v1h-1zM1629 945h1v1h-1zM1664 945h1v1h-1zM1699 945h1v1h-1zM1734 945h1v1h-1zM20 969h1v1h-1zM90 969h1v1h-1zM125 969h1v1h-1zM160 969h1v1h-1zM195 969h1v1h-1zM230 969h1v1h-1zM265 969h1v1h-1zM300 969h1v1h-1zM335 969h1v1h-1zM370 969h1v1h-1zM405 969h1v1h-1zM440 969h1v1h-1zM475 969h1v1h-1zM510 969h1v1h-1zM545 969h1v1h-1zM580 969h1v1h-1zM615 969h1v1h-1zM650 969h1v1h-1zM685 969h1v1h-1zM720 969h1v1h-1zM754 969h1v1h-1zM789 969h1v1h-1zM824 969h1v1h-1zM859 969h1v1h-1zM894 969h1v1h-1zM929 969h1v1h-1zM964 969h1v1h-1zM999 969h1v1h-1zM1034 969h1v1h-1zM1069 969h1v1h-1zM1104 969h1v1h-1zM1139 969h1v1h-1zM1174 969h1v1h-1zM1209 969h1v1h-1zM1244 969h1v1h-1zM1279 969h1v1h-1zM1314 969h1v1h-1zM1349 969h1v1h-1zM1384 969h1v1h-1zM1419 969h1v1h-1zM1454 969h1v1h-1zM1489 969h1v1h-1zM1524 969h1v1h-1zM1559 969h1v1h-1zM1594 969h1v1h-1zM1629 969h1v1h-1zM1664 969h1v1h-1zM1699 969h1v1h-1zM1734 969h1v1h-1zM20 992h1v1h-1zM90 992h1v1h-1zM125 992h1v1h-1zM160 992h1v1h-1zM195 992h1v1h-1zM230 992h1v1h-1zM265 992h1v1h-1zM300 992h1v1h-1zM335 992h1v1h-1zM370 992h1v1h-1zM405 992h1v1h-1zM440 992h1v1h-1zM475 992h1v1h-1zM510 992h1v1h-1zM545 992h1v1h-1zM580 992h1v1h-1zM615 992h1v1h-1zM650 992h1v1h-1zM685 992h1v1h-1zM720 992h1v1h-1zM754 992h1v1h-1zM789 992h1v1h-1zM824 992h1v1h-1zM859 992h1v1h-1zM894 992h1v1h-1zM929 992h1v1h-1zM964 992h1v1h-1zM999 992h1v1h-1zM1034 992h1v1h-1zM1069 992h1v1h-1zM1104 992h1v1h-1zM1139 992h1v1h-1zM1174 992h1v1h-1zM1209 992h1v1h-1zM1244 992h1v1h-1zM1279 992h1v1h-1zM1314 992h1v1h-1zM1349 992h1v1h-1zM1384 992h1v1h-1zM1419 992h1v1h-1zM1454 992h1v1h-1zM1489 992h1v1h-1zM1524 992h1v1h-1zM1559 992h1v1h-1zM1594 992h1v1h-1zM1629 992h1v1h-1zM1664 992h1v1h-1zM1699 992h1v1h-1zM1734 992h1v1h-1z"/><path fill="#c8c8c8" d="M230 58h1v1h-1zM230 62h1v1h-1zM230 67h1v1h-1zM230 71h1v1h-1zM230 76h1v1h-1zM230 81h1v1h-1zM230 85h1v1h-1zM230 90h1v1h-1zM230 94h1v1h-1zM230 99h1v1h-1zM230 104h1v1h-1zM230 108h1v1h-1zM230 113h1v1h-1zM230 118h1v1h-1zM230 123h1v1h-1zM230 128h1v1h-1zM230 132h1v1h-1zM230 137h1v1h-1zM230 141h1v1h-1zM230 146h1v1h-1zM230 151h1v1h-1zM230 155h1v1h-1zM230 160h1v1h-1zM230 164h1v1h-1zM230 169h1v1h-1zM230 174h1v1h-1zM230 178h1v1h-1zM230 183h1v1h-1zM230 187h1v1h-1zM230 192h1v1h-1zM230 197h1v1h-1zM230 201h1v1h-1zM230 206h1v1h-1zM230 210h1v1h-1zM230 215h1v1h-1zM230 220h1v1h-1zM230 224h1v1h-1zM230 229h1v1h-1zM230 234h1v1h-1zM230 239h1v1h-1zM230 244h1v1h-1zM230 248h1v1h-1zM230 253h1v1h-1zM230 257h1v1h-1zM230 262h1v1h-1zM230 272h1v1h-1zM230 277h1v1h-1zM230 282h1v1h-1zM230 287h1v1h-1zM230 292h1v1h-1zM230 296h1v1h-1zM230 301h1v1h-1zM230 305h1v1h-1zM230 310h1v1h-1zM230 315h1v1h-1zM230 319h1v1h-1zM230 324h1v1h-1zM230 328h1v1h-1zM230 333h1v1h-1zM230 338h1v1h-1zM230 342h1v1h-1zM230 347h1v1h-1zM230 352h1v1h-1zM230 357h1v1h-1zM230 362h1v1h-1zM230 366h1v1h-1zM230 371h1v1h-1zM230 375h1v1h-1zM230 380h1v1h-1zM230 385h1v1h-1zM230 389h1v1h-1zM230 394h1v1h-1zM230 398h1v1h-1zM230 403h1v1h-1zM230 408h1v1h-1zM230 412h1v1h-1zM230 417h1v1h-1zM230 421h1v1h-1zM230 426h1v1h-1zM230 435h1v1h-1zM230 440h1v1h-1zM230 444h1v1h-1zM230 449h1v1h-1zM230 454h1v1h-1zM230 458h1v1h-1zM230 463h1v1h-1zM230 468h1v1h-1zM230 473h1v1h-1zM230 478h1v1h-1zM230 482h1v1h-1zM230 487h1v1h-1zM230 491h1v1h-1zM230 496h1v1h-1zM230 501h1v1h-1zM230 506h1v1h-1zM230 511h1v1h-1zM230 516h1v1h-1zM230 521h1v1h-1zM230 526h1v1h-1zM230 530h1v1h-1zM230 535h1v1h-1zM230 539h1v1h-1zM230 544h1v1h-1zM230 549h1v1h-1zM230 553h1v1h-1zM230 558h1v1h-1zM230 562h1v1h-1zM230 567h1v1h-1zM230 572h1v1h-1zM230 576h1v1h-1zM230 581h1v1h-1zM230 586h1v1h-1zM230 591h1v1h-1zM230 596h1v1h-1zM230 600h1v1h-1zM230 605h1v1h-1zM230 609h1v1h-1zM230 614h1v1h-1zM230 619h1v1h-1zM230 623h1v1h-1zM230 628h1v1h-1zM230 632h1v1h-1zM230 637h1v1h-1zM230 642h1v1h-1zM230 646h1v1h-1zM230 651h1v1h-1zM230 655h1v1h-1zM230 660h1v1h-1zM230 665h1v1h-1zM230 669h1v1h-1zM230 674h1v1h-1zM230 678h1v1h-1zM230 683h1v1h-1zM230 688h1v1h-1zM230 692h1v1h-1zM230 697h1v1h-1zM230 702h1v1h-1zM230 707h1v1h-1zM230 712h1v1h-1zM230 716h1v1h-1zM230 721h1v1h-1zM230 725h1v1h-1zM230 730h1v1h-1zM230 739h1v1h-1zM230 744h1v1h-1zM230 749h1v1h-1zM230 754h1v1h-1zM230 763h1v1h-1zM230 768h1v1h-1zM230 772h1v1h-1zM230 777h1v1h-1zM230 782h1v1h-1zM230 786h1v1h-1zM230 791h1v1h-1zM230 796h1v1h-1zM230 801h1v1h-1zM230 806h1v1h-1zM230 810h1v1h-1zM230 815h1v1h-1zM230 819h1v1h-1zM230 824h1v1h-1zM230 829h1v1h-1zM230 833h1v1h-1zM230 838h1v1h-1zM230 842h1v1h-1zM230 847h1v1h-1zM230 852h1v1h-1zM230 856h1v1h-1zM230 861h1v1h-1zM230 866h1v1h-1zM230 871h1v1h-1zM230 880h1v1h-1zM230 885h1v1h-1zM230 889h1v1h-1zM230 894h1v1h-1zM230 899h1v1h-1zM230 903h1v1h-1zM230 908h1v1h-1zM230 912h1v1h-1zM230 917h1v1h-1zM230 922h1v1h-1zM230 926h1v1h-1zM230 931h1v1h-1zM230 935h1v1h-1zM230 940h1v1h-1zM230 945h1v1h-1zM230 949h1v1h-1zM230 954h1v1h-1zM230 959h1v1h-1zM230 964h1v1h-1zM230 969h1v1h-1zM230 973h1v1h-1zM230 978h1v1h-1zM230 982h1v1h-1zM230 987h1v1h-1zM405 58h1v1h-1zM405 62h1v1h-1zM405 67h1v1h-1zM405 71h1v1h-1zM405 76h1v1h-1zM405 81h1v1h-1zM405 85h1v1h-1zM405 90h1v1h-1zM405 94h1v1h-1zM405 99h1v1h-1zM405 104h1v1h-1zM405 108h1v1h-1zM405 113h1v1h-1zM405 118h1v1h-1zM405 123h1v1h-1zM405 128h1v1h-1zM405 132h1v1h-1zM405 137h1v1h-1zM405 141h1v1h-1zM405 146h1v1h-1zM405 151h1v1h-1zM405 155h1v1h-1zM405 160h1v1h-1zM405 164h1v1h-1zM405 169h1v1h-1zM405 174h1v1h-1zM405 178h1v1h-1zM405 183h1v1h-1zM405 187h1v1h-1zM405 192h1v1h-1zM405 197h1v1h-1zM405 201h1v1h-1zM405 206h1v1h-1zM405 210h1v1h-1zM405 215h1v1h-1zM405 220h1v1h-1zM405 224h1v1h-1zM405 229h1v1h-1zM405 234h1v1h-1zM405 239h1v1h-1zM405 244h1v1h-1zM405 248h1v1h-1zM405 253h1v1h-1zM405 257h1v1h-1zM405 262h1v1h-1zM405 272h1v1h-1zM405 277h1v1h-1zM405 282h1v1h-1zM405 287h1v1h-1zM405 292h1v1h-1zM405 296h1v1h-1zM405 301h1v1h-1zM405 305h1v1h-1zM405 310h1v1h-1zM405 315h1v1h-1zM405 319h1v1h-1zM405 324h1v1h-1zM405 328h1v1h-1zM405 333h1v1h-1zM405 338h1v1h-1zM405 342h1v1h-1zM405 347h1v1h-1zM405 352h1v1h-1zM405 357h1v1h-1zM405 362h1v1h-1zM405 366h1v1h-1zM405 371h1v1h-1zM405 375h1v1h-1zM405 380h1v1h-1zM405 385h1v1h-1zM405 389h1v1h-1zM405 394h1v1h-1zM405 398h1v1h-1zM405 403h1v1h-1zM405 408h1v1h-1zM405 412h1v1h-1zM405 417h1v1h-1zM405 421h1v1h-1zM405 426h1v1h-1zM405 435h1v1h-1zM405 440h1v1h-1zM405 444h1v1h-1zM405 449h1v1h-1zM405 454h1v1h-1zM405 458h1v1h-1zM405 463h1v1h-1zM405 468h1v1h-1zM405 473h1v1h-1zM405 478h1v1h-1zM405 482h1v1h-1zM405 487h1v1h-1zM405 491h1v1h-1zM405 496h1v1h-1zM405 501h1v1h-1zM405 506h1v1h-1zM405 511h1v1h-1zM405 516h1v1h-1zM405 521h1v1h-1zM405 526h1v1h-1zM405 530h1v1h-1zM405 535h1v1h-1zM405 539h1v1h-1zM405 544h1v1h-1zM405 549h1v1h-1zM405 553h1v1h-1zM405 558h1v1h-1zM405 562h1v1h-1zM405 567h1v1h-1zM405 572h1v1h-1zM405 576h1v1h-1zM405 581h1v1h-1zM405 586h1v1h-1zM405 591h1v1h-1zM405 596h1v1h-1zM405 600h1v1h-1zM405 605h1v1h-1zM405 609h1v1h-1zM405 614h1v1h-1zM405 619h1v1h-1zM405 623h1v1h-1zM405 628h1v1h-1zM405 632h1v1h-1zM405 637h1v1h-1zM405 642h1v1h-1zM405 646h1v1h-1zM405 651h1v1h-1zM405 655h1v1h-1zM405 660h1v1h-1zM405 665h1v1h-1zM405 669h1v1h-1zM405 674h1v1h-1zM405 678h1v1h-1zM405 683h1v1h-1zM405 688h1v1h-1zM405 692h1v1h-1zM405 697h1v1h-1zM405 702h1v1h-1zM405 707h1v1h-1zM405 712h1v1h-1zM405 716h1v1h-1zM405 721h1v1h-1zM405 725h1v1h-1zM405 730h1v1h-1zM405 739h1v1h-1zM405 744h1v1h-1zM405 749h1v1h-1zM405 754h1v1h-1zM405 763h1v1h-1zM405 768h1v1h-1zM405 772h1v1h-1zM405 777h1v1h-1zM405 782h1v1h-1zM405 786h1v1h-1zM405 791h1v1h-1zM405 796h1v1h-1zM405 801h1v1h-1zM405 806h1v1h-1zM405 810h1v1h-1zM405 815h1v1h-1zM405 819h1v1h-1zM405 824h1v1h-1zM405 829h1v1h-1zM405 833h1v1h-1zM405 838h1v1h-1zM405 842h1v1h-1zM405 847h1v1h-1zM405 852h1v1h-1zM405 856h1v1h-1zM405 861h1v1h-1zM405 866h1v1h-1zM405 871h1v1h-1zM405 880h1v1h-1zM405 885h1v1h-1zM405 889h1v1h-1zM405 894h1v1h-1zM405 899h1v1h-1zM405 903h1v1h-1zM405 908h1v1h-1zM405 912h1v1h-1zM405 917h1v1h-1zM405 922h1v1h-1zM405 926h1v1h-1zM405 931h1v1h-1zM405 935h1v1h-1zM405 940h1v1h-1zM405 945h1v1h-1zM405 949h1v1h-1zM405 954h1v1h-1zM405 959h1v1h-1zM405 964h1v1h-1zM405 969h1v1h-1zM405 973h1v1h-1zM405 978h1v1h-1zM405 982h1v1h-1zM405 987h1v1h-1zM580 58h1v1h-1zM580 62h1v1h-1zM580 67h1v1h-1zM580 71h1v1h-1zM580 76h1v1h-1zM580 81h1v1h-1zM580 85h1v1h-1zM580 90h1v1h-1zM580 94h1v1h-1zM580 99h1v1h-1zM580 104h1v1h-1zM580 108h1v1h-1zM580 113h1v1h-1zM580 118h1v1h-1zM580 123h1v1h-1zM580 128h1v1h-1zM580 132h1v1h-1zM580 137h1v1h-1zM580 141h1v1h-1zM580 146h1v1h-1zM580 151h1v1h-1zM580 155h1v1h-1zM580 160h1v1h-1zM580 164h1v1h-1zM580 169h1v1h-1zM580 174h1v1h-1zM580 178h1v1h-1zM580 183h1v1h-1zM580 187h1v1h-1zM580 192h1v1h-1zM580 197h1v1h-1zM580 201h1v1h-1zM580 206h1v1h-1zM580 210h1v1h-1zM580 215h1v1h-1zM580 220h1v1h-1zM580 224h1v1h-1zM580 229h1v1h-1zM580 234h1v1h-1zM580 239h1v1h-1zM580 244h1v1h-1zM580 248h1v1h-1zM580 253h1v1h-1zM580 257h1v1h-1zM580 262h1v1h-1zM580 272h1v1h-1zM580 277h1v1h-1zM580 282h1v1h-1zM580 287h1v1h-1zM580 292h1v1h-1zM580 296h1v1h-1zM580 301h1v1h-1zM580 305h1v1h-1zM580 310h1v1h-1zM580 315h1v1h-1zM580 319h1v1h-1zM580 324h1v1h-1zM580 328h1v1h-1zM580 333h1v1h-1zM580 338h1v1h-1zM580 342h1v1h-1zM580 347h1v1h-1zM580 352h1v1h-1zM580 357h1v1h-1zM580 362h1v1h-1zM580 366h1v1h-1zM580 371h1v1h-1zM580 375h1v1h-1zM580 380h1v1h-1zM580 385h1v1h-1zM580 389h1v1h-1zM580 394h1v1h-1zM580 398h1v1h-1zM580 403h1v1h-1zM580 408h1v1h-1zM580 412h1v1h-1zM580 417h1v1h-1zM580 421h1v1h-1zM580 426h1v1h-1zM580 435h1v1h-1zM580 440h1v1h-1zM580 444h1v1h-1zM580 449h1v1h-1zM580 454h1v1h-1zM580 458h1v1h-1zM580 463h1v1h-1zM580 468h1v1h-1zM580 473h1v1h-1zM580 478h1v1h-1zM580 482h1v1h-1zM580 487h1v1h-1zM580 491h1v1h-1zM580 496h1v1h-1zM580 501h1v1h-1zM580 506h1v1h-1zM580 511h1v1h-1zM580 516h1v1h-1zM580 521h1v1h-1zM580 526h1v1h-1zM580 530h1v1h-1zM580 535h1v1h-1zM580 539h1v1h-1zM580 544h1v1h-1zM580 549h1v1h-1zM580 553h1v1h-1zM580 558h1v1h-1zM580 562h1v1h-1zM580 567h1v1h-1zM580 572h1v1h-1zM580 576h1v1h-1zM580 581h1v1h-1zM580 586h1v1h-1zM580 591h1v1h-1zM580 596h1v1h-1zM580 600h1v1h-1zM580 605h1v1h-1zM580 609h1v1h-1zM580 614h1v1h-1zM580 619h1v1h-1zM580 623h1v1h-1zM580 628h1v1h-1zM580 632h1v1h-1zM580 637h1v1h-1zM580 642h1v1h-1zM580 646h1v1h-1zM580 651h1v1h-1zM580 655h1v1h-1zM580 660h1v1h-1zM580 665h1v1h-1zM580 669h1v1h-1zM580 674h1v1h-1zM580 678h1v1h-1zM580 683h1v1h-1zM580 688h1v1h-1zM580 692h1v1h-1zM580 697h1v1h-1zM580 702h1v1h-1zM580 707h1v1h-1zM580 712h1v1h-1zM580 716h1v1h-1zM580 721h1v1h-1zM580 725h1v1h-1zM580 730h1v1h-1zM580 739h1v1h-1zM580 744h1v1h-1zM580 749h1v1h-1zM580 754h1v1h-1zM580 763h1v1h-1zM580 768h1v1h-1zM580 772h1v1h-1zM580 777h1v1h-1zM580 782h1v1h-1zM580 786h1v1h-1zM580 791h1v1h-1zM580 796h1v1h-1zM580 801h1v1h-1zM580 806h1v1h-1zM580 810h1v1h-1zM580 815h1v1h-1zM580 819h1v1h-1zM580 824h1v1h-1zM580 829h1v1h-1zM580 833h1v1h-1zM580 838h1v1h-1zM580 842h1v1h-1zM580 847h1v1h-1zM580 852h1v1h-1zM580 856h1v1h-1zM580 861h1v1h-1zM580 866h1v1h-1zM580 871h1v1h-1zM580 880h1v1h-1zM580 885h1v1h-1zM580 889h1v1h-1zM580 894h1v1h-1zM580 899h1v1h-1zM580 903h1v1h-1zM580 908h1v1h-1zM580 912h1v1h-1zM580 917h1v1h-1zM580 922h1v1h-1zM580 926h1v1h-1zM580 931h1v1h-1zM580 935h1v1h-1zM580 940h1v1h-1zM580 945h1v1h-1zM580 949h1v1h-1zM580 954h1v1h-1zM580 959h1v1h-1zM580 964h1v1h-1zM580 969h1v1h-1zM580 973h1v1h-1zM580 978h1v1h-1zM580 982h1v1h-1zM580 987h1v1h-1zM754 58h1v1h-1zM754 62h1v1h-1zM754 67h1v1h-1zM754 71h1v1h-1zM754 76h1v1h-1zM754 81h1v1h-1zM754 85h1v1h-1zM754 90h1v1h-1zM754 94h1v1h-1zM754 99h1v1h-1zM754 104h1v1h-1zM754 108h1v1h-1zM754 113h1v1h-1zM754 118h1v1h-1zM754 123h1v1h-1zM754 128h1v1h-1zM754 132h1v1h-1zM754 137h1v1h-1zM754 141h1v1h-1zM754 146h1v1h-1zM754 151h1v1h-1zM754 155h1v1h-1zM754 160h1v1h-1zM754 164h1v1h-1zM754 169h1v1h-1zM754 174h1v1h-1zM754 178h1v1h-1zM754 183h1v1h-1zM754 187h1v1h-1zM754 192h1v1h-1zM754 197h1v1h-1zM754 201h1v1h-1zM754 206h1v1h-1zM754 210h1v1h-1zM754 215h1v1h-1zM754 220h1v1h-1zM754 224h1v1h-1zM754 229h1v1h-1zM754 234h1v1h-1zM754 239h1v1h-1zM754 244h1v1h-1zM754 248h1v1h-1zM754 253h1v1h-1zM754 257h1v1h-1zM754 262h1v1h-1zM754 272h1v1h-1zM754 277h1v1h-1zM754 282h1v1h-1zM754 287h1v1h-1zM754 292h1v1h-1zM754 296h1v1h-1zM754 301h1v1h-1zM754 305h1v1h-1zM754 310h1v1h-1zM754 315h1v1h-1zM754 319h1v1h-1zM754 324h1v1h-1zM754 328h1v1h-1zM754 333h1v1h-1zM754 338h1v1h-1zM754 342h1v1h-1zM754 347h1v1h-1zM754 352h1v1h-1zM754 357h1v1h-1zM754 362h1v1h-1zM754 366h1v1h-1zM754 371h1v1h-1zM754 375h1v1h-1zM754 380h1v1h-1zM754 385h1v1h-1zM754 389h1v1h-1zM754 394h1v1h-1zM754 398h1v1h-1zM754 403h1v1h-1zM754 408h1v1h-1zM754 412h1v1h-1zM754 417h1v1h-1zM754 421h1v1h-1zM754 426h1v1h-1zM754 435h1v1h-1zM754 440h1v1h-1zM754 444h1v1h-1zM754 449h1v1h-1zM754 454h1v1h-1zM754 458h1v1h-1zM754 463h1v1h-1zM754 468h1v1h-1zM754 473h1v1h-1zM754 478h1v1h-1zM754 482h1v1h-1zM754 487h1v1h-1zM754 491h1v1h-1zM754 496h1v1h-1zM754 501h1v1h-1zM754 506h1v1h-1zM754 511h1v1h-1zM754 516h1v1h-1zM754 521h1v1h-1zM754 526h1v1h-1zM754 530h1v1h-1zM754 535h1v1h-1zM754 539h1v1h-1zM754 544h1v1h-1zM754 549h1v1h-1zM754 553h1v1h-1zM754 558h1v1h-1zM754 562h1v1h-1zM754 567h1v1h-1zM754 572h1v1h-1zM754 576h1v1h-1zM754 581h1v1h-1zM754 586h1v1h-1zM754 591h1v1h-1zM754 596h1v1h-1zM754 600h1v1h-1zM754 605h1v1h-1zM754 609h1v1h-1zM754 614h1v1h-1zM754 619h1v1h-1zM754 623h1v1h-1zM754 628h1v1h-1zM754 632h1v1h-1zM754 637h1v1h-1zM754 642h1v1h-1zM754 646h1v1h-1zM754 651h1v1h-1zM754 655h1v1h-1zM754 660h1v1h-1zM754 665h1v1h-1zM754 669h1v1h-1zM754 674h1v1h-1zM754 678h1v1h-1zM754 683h1v1h-1zM754 688h1v1h-1zM754 692h1v1h-1zM754 697h1v1h-1zM754 702h1v1h-1zM754 707h1v1h-1zM754 712h1v1h-1zM754 716h1v1h-1zM754 721h1v1h-1zM754 725h1v1h-1zM754 730h1v1h-1zM754 739h1v1h-1zM754 744h1v1h-1zM754 749h1v1h-1zM754 754h1v1h-1zM754 763h1v1h-1zM754 768h1v1h-1zM754 772h1v1h-1zM754 777h1v1h-1zM754 782h1v1h-1zM754 786h1v1h-1zM754 791h1v1h-1zM754 796h1v1h-1zM754 801h1v1h-1zM754 806h1v1h-1zM754 810h1v1h-1zM754 815h1v1h-1zM754 819h1v1h-1zM754 824h1v1h-1zM754 829h1v1h-1zM754 833h1v1h-1zM754 838h1v1h-1zM754 842h1v1h-1zM754 847h1v1h-1zM754 852h1v1h-1zM754 856h1v1h-1zM754 861h1v1h-1zM754 866h1v1h-1zM754 871h1v1h-1zM754 880h1v1h-1zM754 885h1v1h-1zM754 889h1v1h-1zM754 894h1v1h-1zM754 899h1v1h-1zM754 903h1v1h-1zM754 908h1v1h-1zM754 912h1v1h-1zM754 917h1v1h-1zM754 922h1v1h-1zM754 926h1v1h-1zM754 931h1v1h-1zM754 935h1v1h-1zM754 940h1v1h-1zM754 945h1v1h-1zM754 949h1v1h-1zM754 954h1v1h-1zM754 959h1v1h-1zM754 964h1v1h-1zM754 969h1v1h-1zM754 973h1v1h-1zM754 978h1v1h-1zM754 982h1v1h-1zM754 987h1v1h-1zM929 58h1v1h-1zM929 62h1v1h-1zM929 67h1v1h-1zM929 71h1v1h-1zM929 76h1v1h-1zM929 81h1v1h-1zM929 85h1v1h-1zM929 90h1v1h-1zM929 94h1v1h-1zM929 99h1v1h-1zM929 104h1v1h-1zM929 108h1v1h-1zM929 113h1v1h-1zM929 118h1v1h-1zM929 123h1v1h-1zM929 128h1v1h-1zM929 132h1v1h-1zM929 137h1v1h-1zM929 141h1v1h-1zM929 146h1v1h-1zM929 151h1v1h-1zM929 155h1v1h-1zM929 160h1v1h-1zM929 164h1v1h-1zM929 169h1v1h-1zM929 174h1v1h-1zM929 178h1v1h-1zM929 183h1v1h-1zM929 187h1v1h-1zM929 192h1v1h-1zM929 197h1v1h-1zM929 201h1v1h-1zM929 206h1v1h-1zM929 210h1v1h-1zM929 215h1v1h-1zM929 220h1v1h-1zM929 224h1v1h-1zM929 229h1v1h-1zM929 234h1v1h-1zM929 239h1v1h-1zM929 244h1v1h-1zM929 248h1v1h-1zM929 253h1v1h-1zM929 257h1v1h-1zM929 262h1v1h-1zM929 272h1v1h-1zM929 277h1v1h-1zM929 282h1v1h-1zM929 287h1v1h-1zM929 292h1v1h-1zM929 296h1v1h-1zM929 301h1v1h-1zM929 305h1v1h-1zM929 310h1v1h-1zM929 315h1v1h-1zM929 319h1v1h-1zM929 324h1v1h-1zM929 328h1v1h-1zM929 333h1v1h-1zM929 338h1v1h-1zM929 342h1v1h-1zM929 347h1v1h-1zM929 352h1v1h-1zM929 357h1v1h-1zM929 362h1v1h-1zM929 366h1v1h-1zM929 371h1v1h-1zM929 375h1v1h-1zM929 380h1v1h-1zM929 385h1v1h-1zM929 389h1v1h-1zM929 394h1v1h-1zM929 398h1v1h-1zM929 403h1v1h-1zM929 408h1v1h-1zM929 412h1v1h-1zM929 417h1v1h-1zM929 421h1v1h-1zM929 426h1v1h-1zM929 435h1v1h-1zM929 440h1v1h-1zM929 444h1v1h-1zM929 449h1v1h-1zM929 454h1v1h-1zM929 458h1v1h-1zM929 463h1v1h-1zM929 468h1v1h-1zM929 473h1v1h-1zM929 478h1v1h-1zM929 482h1v1h-1zM929 487h1v1h-1zM929 491h1v1h-1zM929 496h1v1h-1zM929 501h1v1h-1zM929 506h1v1h-1zM929 511h1v1h-1zM929 516h1v1h-1zM929 521h1v1h-1zM929 526h1v1h-1zM929 530h1v1h-1zM929 535h1v1h-1zM929 539h1v1h-1zM929 544h1v1h-1zM929 549h1v1h-1zM929 553h1v1h-1zM929 558h1v1h-1zM929 562h1v1h-1zM929 567h1v1h-1zM929 572h1v1h-1zM929 576h1v1h-1zM929 581h1v1h-1zM929 586h1v1h-1zM929 591h1v1h-1zM929 596h1v1h-1zM929 600h1v1h-1zM929 605h1v1h-1zM929 609h1v1h-1zM929 614h1v1h-1zM929 619h1v1h-1zM929 623h1v1h-1zM929 628h1v1h-1zM929 632h1v1h-1zM929 637h1v1h-1zM929 642h1v1h-1zM929 646h1v1h-1zM929 651h1v1h-1zM929 655h1v1h-1zM929 660h1v1h-1zM929 665h1v1h-1zM929 669h1v1h-1zM929 674h1v1h-1zM929 678h1v1h-1zM929 683h1v1h-1zM929 688h1v1h-1zM929 692h1v1h-1zM929 697h1v1h-1zM929 702h1v1h-1zM929 707h1v1h-1zM929 712h1v1h-1zM929 716h1v1h-1zM929 721h1v1h-1zM929 725h1v1h-1zM929 730h1v1h-1zM929 739h1v1h-1zM929 744h1v1h-1zM929 749h1v1h-1zM929 754h1v1h-1zM929 763h1v1h-1zM929 768h1v1h-1zM929 772h1v1h-1zM929 777h1v1h-1zM929 782h1v1h-1zM929 786h1v1h-1zM929 791h1v1h-1zM929 796h1v1h-1zM929 801h1v1h-1zM929 806h1v1h-1zM929 810h1v1h-1zM929 815h1v1h-1zM929 819h1v1h-1zM929 824h1v1h-1zM929 829h1v1h-1zM929 833h1v1h-1zM929 838h1v1h-1zM929 842h1v1h-1zM929 847h1v1h-1zM929 852h1v1h-1zM929 856h1v1h-1zM929 861h1v1h-1zM929 866h1v1h-1zM929 871h1v1h-1zM929 880h1v1h-1zM929 885h1v1h-1zM929 889h1v1h-1zM929 894h1v1h-1zM929 899h1v1h-1zM929 903h1v1h-1zM929 908h1v1h-1zM929 912h1v1h-1zM929 917h1v1h-1zM929 922h1v1h-1zM929 926h1v1h-1zM929 931h1v1h-1zM929 935h1v1h-1zM929 940h1v1h-1zM929 945h1v1h-1zM929 949h1v1h-1zM929 954h1v1h-1zM929 959h1v1h-1zM929 964h1v1h-1zM929 969h1v1h-1zM929 973h1v1h-1zM929 978h1v1h-1zM929 982h1v1h-1zM929 987h1v1h-1zM1104 58h1v1h-1zM1104 62h1v1h-1zM1104 67h1v1h-1zM1104 71h1v1h-1zM1104 76h1v1h-1zM1104 81h1v1h-1zM1104 85h1v1h-1zM1104 90h1v1h-1zM1104 94h1v1h-1zM1104 99h1v1h-1zM1104 104h1v1h-1zM1104 108h1v1h-1zM1104 113h1v1h-1zM1104 118h1v1h-1zM1104 123h1v1h-1zM1104 128h1v1h-1zM1104 132h1v1h-1zM1104 137h1v1h-1zM1104 141h1v1h-1zM1104 146h1v1h-1zM1104 151h1v1h-1zM1104 155h1v1h-1zM1104 160h1v1h-1zM1104 164h1v1h-1zM1104 169h1v1h-1zM1104 174h1v1h-1zM1104 178h1v1h-1zM1104 183h1v1h-1zM1104 187h1v1h-1zM1104 192h1v1h-1zM1104 197h1v1h-1zM1104 201h1v1h-1zM1104 206h1v1h-1zM1104 210h1v1h-1zM1104 215h1v1h-1zM1104 220h1v1h-1zM1104 224h1v1h-1zM1104 229h1v1h-1zM1104 234h1v1h-1zM1104 239h1v1h-1zM1104 244h1v1h-1zM1104 248h1v1h-1zM1104 253h1v1h-1zM1104 257h1v1h-1zM1104 262h1v1h-1zM1104 272h1v1h-1zM1104 277h1v1h-1zM1104 282h1v1h-1zM1104 287h1v1h-1zM1104 292h1v1h-1zM1104 296h1v1h-1zM1104 301h1v1h-1zM1104 305h1v1h-1zM1104 310h1v1h-1zM1104 315h1v1h-1zM1104 319h1v1h-1zM1104 324h1v1h-1zM1104 328h1v1h-1zM1104 333h1v1h-1zM1104 338h1v1h-1zM1104 342h1v1h-1zM1104 347h1v1h-1zM1104 352h1v1h-1zM1104 357h1v1h-1zM1104 362h1v1h-1zM1104 366h1v1h-1zM1104 371h1v1h-1zM1104 375h1v1h-1zM1104 380h1v1h-1zM1104 385h1v1h-1zM1104 389h1v1h-1zM1104 394h1v1h-1zM1104 398h1v1h-1zM1104 403h1v1h-1zM1104 408h1v1h-1zM1104 412h1v1h-1zM1104 417h1v1h-1zM1104 421h1v1h-1zM1104 426h1v1h-1zM1104 435h1v1h-1zM1104 440h1v1h-1zM1104 444h1v1h-1zM1104 449h1v1h-1zM1104 454h1v1h-1zM1104 458h1v1h-1zM1104 463h1v1h-1zM1104 468h1v1h-1zM1104 473h1v1h-1zM1104 478h1v1h-1zM1104 482h1v1h-1zM1104 487h1v1h-1zM1104 491h1v1h-1zM1104 496h1v1h-1zM1104 501h1v1h-1zM1104 506h1v1h-1zM1104 511h1v1h-1zM1104 516h1v1h-1zM1104 521h1v1h-1zM1104 526h1v1h-1zM1104 530h1v1h-1zM1104 535h1v1h-1zM1104 539h1v1h-1zM1104 544h1v1h-1zM1104 549h1v1h-1zM1104 553h1v1h-1zM1104 558h1v1h-1zM1104 562h1v1h-1zM1104 567h1v1h-1zM1104 572h1v1h-1zM1104 576h1v1h-1zM1104 581h1v1h-1zM1104 586h1v1h-1zM1104 591h1v1h-1zM1104 596h1v1h-1zM1104 600h1v1h-1zM1104 605h1v1h-1zM1104 609h1v1h-1zM1104 614h1v1h-1zM1104 619h1v1h-1zM1104 623h1v1h-1zM1104 628h1v1h-1zM1104 632h1v1h-1zM1104 637h1v1h-1zM1104 642h1v1h-1zM1104 646h1v1h-1zM1104 651h1v1h-1zM1104 655h1v1h-1zM1104 660h1v1h-1zM1104 665h1v1h-1zM1104 669h1v1h-1zM1104 674h1v1h-1zM1104 678h1v1h-1zM1104 683h1v1h-1zM1104 688h1v1h-1zM1104 692h1v1h-1zM1104 697h1v1h-1zM1104 702h1v1h-1zM1104 707h1v1h-1zM1104 712h1v1h-1zM1104 716h1v1h-1zM1104 721h1v1h-1zM1104 725h1v1h-1zM1104 730h1v1h-1zM1104 739h1v1h-1zM1104 744h1v1h-1zM1104 749h1v1h-1zM1104 754h1v1h-1zM1104 763h1v1h-1zM1104 768h1v1h-1zM1104 772h1v1h-1zM1104 777h1v1h-1zM1104 782h1v1h-1zM1104 786h1v1h-1zM1104 791h1v1h-1zM1104 796h1v1h-1zM1104 801h1v1h-1zM1104 806h1v1h-1zM1104 810h1v1h-1zM1104 815h1v1h-1zM1104 819h1v1h-1zM1104 824h1v1h-1zM1104 829h1v1h-1zM1104 833h1v1h-1zM1104 838h1v1h-1zM1104 842h1v1h-1zM1104 847h1v1h-1zM1104 852h1v1h-1zM1104 856h1v1h-1zM1104 861h1v1h-1zM1104 866h1v1h-1zM1104 871h1v1h-1zM1104 880h1v1h-1zM1104 885h1v1h-1zM1104 889h1v1h-1zM1104 894h1v1h-1zM1104 899h1v1h-1zM1104 903h1v1h-1zM1104 908h1v1h-1zM1104 912h1v1h-1zM1104 917h1v1h-1zM1104 922h1v1h-1zM1104 926h1v1h-1zM1104 931h1v1h-1zM1104 935h1v1h-1zM1104 940h1v1h-1zM1104 945h1v1h-1zM1104 949h1v1h-1zM1104 954h1v1h-1zM1104 959h1v1h-1zM1104 964h1v1h-1zM1104 969h1v1h-1zM1104 973h1v1h-1zM1104 978h1v1h-1zM1104 982h1v1h-1zM1104 987h1v1h-1zM1279 58h1v1h-1zM1279 62h1v1h-1zM1279 67h1v1h-1zM1279 71h1v1h-1zM1279 76h1v1h-1zM1279 81h1v1h-1zM1279 85h1v1h-1zM1279 90h1v1h-1zM1279 94h1v1h-1zM1279 99h1v1h-1zM1279 104h1v1h-1zM1279 108h1v1h-1zM1279 113h1v1h-1zM1279 118h1v1h-1zM1279 123h1v1h-1zM1279 128h1v1h-1zM1279 132h1v1h-1zM1279 137h1v1h-1zM1279 141h1v1h-1zM1279 146h1v1h-1zM1279 151h1v1h-1zM1279 155h1v1h-1zM1279 160h1v1h-1zM1279 164h1v1h-1zM1279 169h1v1h-1zM1279 174h1v1h-1zM1279 178h1v1h-1zM1279 183h1v1h-1zM1279 187h1v1h-1zM1279 192h1v1h-1zM1279 197h1v1h-1zM1279 201h1v1h-1zM1279 206h1v1h-1zM1279 210h1v1h-1zM1279 215h1v1h-1zM1279 220h1v1h-1zM1279 224h1v1h-1zM1279 229h1v1h-1zM1279 234h1v1h-1zM1279 239h1v1h-1zM1279 244h1v1h-1zM1279 248h1v1h-1zM1279 253h1v1h-1zM1279 257h1v1h-1zM1279 262h1v1h-1zM1279 272h1v1h-1zM1279 277h1v1h-1zM1279 282h1v1h-1zM1279 287h1v1h-1zM1279 292h1v1h-1zM1279 296h1v1h-1zM1279 301h1v1h-1zM1279 305h1v1h-1zM1279 310h1v1h-1zM1279 315h1v1h-1zM1279 319h1v1h-1zM1279 324h1v1h-1zM1279 328h1v1h-1zM1279 333h1v1h-1zM1279 338h1v1h-1zM1279 342h1v1h-1zM1279 347h1v1h-1zM1279 352h1v1h-1zM1279 357h1v1h-1zM1279 362h1v1h-1zM1279 366h1v1h-1zM1279 371h1v1h-1zM1279 375h1v1h-1zM1279 380h1v1h-1zM1279 385h1v1h-1zM1279 389h1v1h-1zM1279 394h1v1h-1zM1279 398h1v1h-1zM1279 403h1v1h-1zM1279 408h1v1h-1zM1279 412h1v1h-1zM1279 417h1v1h-1zM1279 421h1v1h-1zM1279 426h1v1h-1zM1279 435h1v1h-1zM1279 440h1v1h-1zM1279 444h1v1h-1zM1279 449h1v1h-1zM1279 454h1v1h-1zM1279 458h1v1h-1zM1279 463h1v1h-1zM1279 468h1v1h-1zM1279 473h1v1h-1zM1279 478h1v1h-1zM1279 482h1v1h-1zM1279 487h1v1h-1zM1279 491h1v1h-1zM1279 496h1v1h-1zM1279 501h1v1h-1zM1279 506h1v1h-1zM1279 511h1v1h-1zM1279 516h1v1h-1zM1279 521h1v1h-1zM1279 526h1v1h-1zM1279 530h1v1h-1zM1279 535h1v1h-1zM1279 539h1v1h-1zM1279 544h1v1h-1zM1279 549h1v1h-1zM1279 553h1v1h-1zM1279 558h1v1h-1zM1279 562h1v1h-1zM1279 567h1v1h-1zM1279 572h1v1h-1zM1279 576h1v1h-1zM1279 581h1v1h-1zM1279 586h1v1h-1zM1279 591h1v1h-1zM1279 596h1v1h-1zM1279 600h1v1h-1zM1279 605h1v1h-1zM1279 609h1v1h-1zM1279 614h1v1h-1zM1279 619h1v1h-1zM1279 623h1v1h-1zM1279 628h1v1h-1zM1279 632h1v1h-1zM1279 637h1v1h-1zM1279 642h1v1h-1zM1279 646h1v1h-1zM1279 651h1v1h-1zM1279 655h1v1h-1zM1279 660h1v1h-1zM1279 665h1v1h-1zM1279 669h1v1h-1zM1279 674h1v1h-1zM1279 678h1v1h-1zM1279 683h1v1h-1zM1279 688h1v1h-1zM1279 692h1v1h-1zM1279 697h1v1h-1zM1279 702h1v1h-1zM1279 707h1v1h-1zM1279 712h1v1h-1zM1279 716h1v1h-1zM1279 721h1v1h-1zM1279 725h1v1h-1zM1279 730h1v1h-1zM1279 739h1v1h-1zM1279 744h1v1h-1zM1279 749h1v1h-1zM1279 754h1v1h-1zM1279 763h1v1h-1zM1279 768h1v1h-1zM1279 772h1v1h-1zM1279 777h1v1h-1zM1279 782h1v1h-1zM1279 786h1v1h-1zM1279 791h1v1h-1zM1279 796h1v1h-1zM1279 801h1v1h-1zM1279 806h1v1h-1zM1279 810h1v1h-1zM1279 815h1v1h-1zM1279 819h1v1h-1zM1279 824h1v1h-1zM1279 829h1v1h-1zM1279 833h1v1h-1zM1279 838h1v1h-1zM1279 842h1v1h-1zM1279 847h1v1h-1zM1279 852h1v1h-1zM1279 856h1v1h-1zM1279 861h1v1h-1zM1279 866h1v1h-1zM1279 871h1v1h-1zM1279 880h1v1h-1zM1279 885h1v1h-1zM1279 889h1v1h-1zM1279 894h1v1h-1zM1279 899h1v1h-1zM1279 903h1v1h-1zM1279 908h1v1h-1zM1279 912h1v1h-1zM1279 917h1v1h-1zM1279 922h1v1h-1zM1279 926h1v1h-1zM1279 931h1v1h-1zM1279 935h1v1h-1zM1279 940h1v1h-1zM1279 945h1v1h-1zM1279 949h1v1h-1zM1279 954h1v1h-1zM1279 959h1v1h-1zM1279 964h1v1h-1zM1279 969h1v1h-1zM1279 973h1v1h-1zM1279 978h1v1h-1zM1279 982h1v1h-1zM1279 987h1v1h-1zM1454 58h1v1h-1zM1454 62h1v1h-1zM1454 67h1v1h-1zM1454 71h1v1h-1zM1454 76h1v1h-1zM1454 81h1v1h-1zM1454 85h1v1h-1zM1454 90h1v1h-1zM1454 94h1v1h-1zM1454 99h1v1h-1zM1454 104h1v1h-1zM1454 108h1v1h-1zM1454 113h1v1h-1zM1454 118h1v1h-1zM1454 123h1v1h-1zM1454 128h1v1h-1zM1454 132h1v1h-1zM1454 137h1v1h-1zM1454 141h1v1h-1zM1454 146h1v1h-1zM1454 151h1v1h-1zM1454 155h1v1h-1zM1454 160h1v1h-1zM1454 164h1v1h-1zM1454 169h1v1h-1zM1454 174h1v1h-1zM1454 178h1v1h-1zM1454 183h1v1h-1zM1454 187h1v1h-1zM1454 192h1v1h-1zM1454 197h1v1h-1zM1454 201h1v1h-1zM1454 206h1v1h-1zM1454 210h1v1h-1zM1454 215h1v1h-1zM1454 220h1v1h-1zM1454 224h1v1h-1zM1454 229h1v1h-1zM1454 234h1v1h-1zM1454 239h1v1h-1zM1454 244h1v1h-1zM1454 248h1v1h-1zM1454 253h1v1h-1zM1454 257h1v1h-1zM1454 262h1v1h-1zM1454 272h1v1h-1zM1454 277h1v1h-1zM1454 282h1v1h-1zM1454 287h1v1h-1zM1454 292h1v1h-1zM1454 296h1v1h-1zM1454 301h1v1h-1zM1454 305h1v1h-1zM1454 310h1v1h-1zM1454 315h1v1h-1zM1454 319h1v1h-1zM1454 324h1v1h-1zM1454 328h1v1h-1zM1454 333h1v1h-1zM1454 338h1v1h-1zM1454 342h1v1h-1zM1454 347h1v1h-1zM1454 352h1v1h-1zM1454 357h1v1h-1zM1454 362h1v1h-1zM1454 366h1v1h-1zM1454 371h1v1h-1zM1454 375h1v1h-1zM1454 380h1v1h-1zM1454 385h1v1h-1zM1454 389h1v1h-1zM1454 394h1v1h-1zM1454 398h1v1h-1zM1454 403h1v1h-1zM1454 408h1v1h-1zM1454 412h1v1h-1zM1454 417h1v1h-1zM1454 421h1v1h-1zM1454 426h1v1h-1zM1454 435h1v1h-1zM1454 440h1v1h-1zM1454 444h1v1h-1zM1454 449h1v1h-1zM1454 454h1v1h-1zM1454 458h1v1h-1zM1454 463h1v1h-1zM1454 468h1v1h-1zM1454 473h1v1h-1zM1454 478h1v1h-1zM1454 482h1v1h-1zM1454 487h1v1h-1zM1454 491h1v1h-1zM1454 496h1v1h-1zM1454 501h1v1h-1zM1454 506h1v1h-1zM1454 511h1v1h-1zM1454 516h1v1h-1zM1454 521h1v1h-1zM1454 526h1v1h-1zM1454 530h1v1h-1zM1454 535h1v1h-1zM1454 539h1v1h-1zM1454 544h1v1h-1zM1454 549h1v1h-1zM1454 553h1v1h-1zM1454 558h1v1h-1zM1454 562h1v1h-1zM1454 567h1v1h-1zM1454 572h1v1h-1zM1454 576h1v1h-1zM1454 581h1v1h-1zM1454 586h1v1h-1zM1454 591h1v1h-1zM1454 596h1v1h-1zM1454 600h1v1h-1zM1454 605h1v1h-1zM1454 609h1v1h-1zM1454 614h1v1h-1zM1454 619h1v1h-1zM1454 623h1v1h-1zM1454 628h1v1h-1zM1454 632h1v1h-1zM1454 637h1v1h-1zM1454 642h1v1h-1zM1454 646h1v1h-1zM1454 651h1v1h-1zM1454 655h1v1h-1zM1454 660h1v1h-1zM1454 665h1v1h-1zM1454 669h1v1h-1zM1454 674h1v1h-1zM1454 678h1v1h-1zM1454 683h1v1h-1zM1454 688h1v1h-1zM1454 692h1v1h-1zM1454 697h1v1h-1zM1454 702h1v1h-1zM1454 707h1v1h-1zM1454 712h1v1h-1zM1454 716h1v1h-1zM1454 721h1v1h-1zM1454 725h1v1h-1zM1454 730h1v1h-1zM1454 739h1v1h-1zM1454 744h1v1h-1zM1454 749h1v1h-1zM1454 754h1v1h-1zM1454 763h1v1h-1zM1454 768h1v1h-1zM1454 772h1v1h-1zM1454 777h1v1h-1zM1454 782h1v1h-1zM1454 786h1v1h-1zM1454 791h1v1h-1zM1454 796h1v1h-1zM1454 801h1v1h-1zM1454 806h1v1h-1zM1454 810h1v1h-1zM1454 815h1v1h-1zM1454 819h1v1h-1zM1454 824h1v1h-1zM1454 829h1v1h-1zM1454 833h1v1h-1zM1454 838h1v1h-1zM1454 842h1v1h-1zM1454 847h1v1h-1zM1454 852h1v1h-1zM1454 856h1v1h-1zM1454 861h1v1h-1zM1454 866h1v1h-1zM1454 871h1v1h-1zM1454 880h1v1h-1zM1454 885h1v1h-1zM1454 889h1v1h-1zM1454 894h1v1h-1zM1454 899h1v1h-1zM1454 903h1v1h-1zM1454 908h1v1h-1zM1454 912h1v1h-1zM1454 917h1v1h-1zM1454 922h1v1h-1zM1454 926h1v1h-1zM1454 931h1v1h-1zM1454 935h1v1h-1zM1454 940h1v1h-1zM1454 945h1v1h-1zM1454 949h1v1h-1zM1454 954h1v1h-1zM1454 959h1v1h-1zM1454 964h1v1h-1zM1454 969h1v1h-1zM1454 973h1v1h-1zM1454 978h1v1h-1zM1454 982h1v1h-1zM1454 987h1v1h-1zM1629 58h1v1h-1zM1629 62h1v1h-1zM1629 67h1v1h-1zM1629 71h1v1h-1zM1629 76h1v1h-1zM1629 81h1v1h-1zM1629 85h1v1h-1zM1629 90h1v1h-1zM1629 94h1v1h-1zM1629 99h1v1h-1zM1629 104h1v1h-1zM1629 108h1v1h-1zM1629 113h1v1h-1zM1629 118h1v1h-1zM1629 123h1v1h-1zM1629 128h1v1h-1zM1629 132h1v1h-1zM1629 137h1v1h-1zM1629 141h1v1h-1zM1629 146h1v1h-1zM1629 151h1v1h-1zM1629 155h1v1h-1zM1629 160h1v1h-1zM1629 164h1v1h-1zM1629 169h1v1h-1zM1629 174h1v1h-1zM1629 178h1v1h-1zM1629 183h1v1h-1zM1629 187h1v1h-1zM1629 192h1v1h-1zM1629 197h1v1h-1zM1629 201h1v1h-1zM1629 206h1v1h-1zM1629 210h1v1h-1zM1629 215h1v1h-1zM1629 220h1v1h-1zM1629 224h1v1h-1zM1629 229h1v1h-1zM1629 234h1v1h-1zM1629 239h1v1h-1zM1629 244h1v1h-1zM1629 248h1v1h-1zM1629 253h1v1h-1zM1629 257h1v1h-1zM1629 262h1v1h-1zM1629 272h1v1h-1zM1629 277h1v1h-1zM1629 282h1v1h-1zM1629 287h1v1h-1zM1629 292h1v1h-1zM1629 296h1v1h-1zM1629 301h1v1h-1zM1629 305h1v1h-1zM1629 310h1v1h-1zM1629 315h1v1h-1zM1629 319h1v1h-1zM1629 324h1v1h-1zM1629 328h1v1h-1zM1629 333h1v1h-1zM1629 338h1v1h-1zM1629 342h1v1h-1zM1629 347h1v1h-1zM1629 352h1v1h-1zM1629 357h1v1h-1zM1629 362h1v1h-1zM1629 366h1v1h-1zM1629 371h1v1h-1zM1629 375h1v1h-1zM1629 380h1v1h-1zM1629 385h1v1h-1zM1629 389h1v1h-1zM1629 394h1v1h-1zM1629 398h1v1h-1zM1629 403h1v1h-1zM1629 408h1v1h-1zM1629 412h1v1h-1zM1629 417h1v1h-1zM1629 421h1v1h-1zM1629 426h1v1h-1zM1629 435h1v1h-1zM1629 440h1v1h-1zM1629 444h1v1h-1zM1629 449h1v1h-1zM1629 454h1v1h-1zM1629 458h1v1h-1zM1629 463h1v1h-1zM1629 468h1v1h-1zM1629 473h1v1h-1zM1629 478h1v1h-1zM1629 482h1v1h-1zM1629 487h1v1h-1zM1629 491h1v1h-1zM1629 496h1v1h-1zM1629 501h1v1h-1zM1629 506h1v1h-1zM1629 511h1v1h-1zM1629 516h1v1h-1zM1629 521h1v1h-1zM1629 526h1v1h-1zM1629 530h1v1h-1zM1629 535h1v1h-1zM1629 539h1v1h-1zM1629 544h1v1h-1zM1629 549h1v1h-1zM1629 553h1v1h-1zM1629 558h1v1h-1zM1629 562h1v1h-1zM1629 567h1v1h-1zM1629 572h1v1h-1zM1629 576h1v1h-1zM1629 581h1v1h-1zM1629 586h1v1h-1zM1629 591h1v1h-1zM1629 596h1v1h-1zM1629 600h1v1h-1zM1629 605h1v1h-1zM1629 609h1v1h-1zM1629 614h1v1h-1zM1629 619h1v1h-1zM1629 623h1v1h-1zM1629 628h1v1h-1zM1629 632h1v1h-1zM1629 637h1v1h-1zM1629 642h1v1h-1zM1629 646h1v1h-1zM1629 651h1v1h-1zM1629 655h1v1h-1zM1629 660h1v1h-1zM1629 665h1v1h-1zM1629 669h1v1h-1zM1629 674h1v1h-1zM1629 678h1v1h-1zM1629 683h1v1h-1zM1629 688h1v1h-1zM1629 692h1v1h-1zM1629 697h1v1h-1zM1629 702h1v1h-1zM1629 707h1v1h-1zM1629 712h1v1h-1zM1629 716h1v1h-1zM1629 721h1v1h-1zM1629 725h1v1h-1zM1629 730h1v1h-1zM1629 739h1v1h-1zM1629 744h1v1h-1zM1629 749h1v1h-1zM1629 754h1v1h-1zM1629 763h1v1h-1zM1629 768h1v1h-1zM1629 772h1v1h-1zM1629 777h1v1h-1zM1629 782h1v1h-1zM1629 786h1v1h-1zM1629 791h1v1h-1zM1629 796h1v1h-1zM1629 801h1v1h-1zM1629 806h1v1h-1zM1629 810h1v1h-1zM1629 815h1v1h-1zM1629 819h1v1h-1zM1629 824h1v1h-1zM1629 829h1v1h-1zM1629 833h1v1h-1zM1629 838h1v1h-1zM1629 842h1v1h-1zM1629 847h1v1h-1zM1629 852h1v1h-1zM1629 856h1v1h-1zM1629 861h1v1h-1zM1629 866h1v1h-1zM1629 871h1v1h-1zM1629 880h1v1h-1zM1629 885h1v1h-1zM1629 889h1v1h-1zM1629 894h1v1h-1zM1629 899h1v1h-1zM1629 903h1v1h-1zM1629 908h1v1h-1zM1629 912h1v1h-1zM1629 917h1v1h-1zM1629 922h1v1h-1zM1629 926h1v1h-1zM1629 931h1v1h-1zM1629 935h1v1h-1zM1629 940h1v1h-1zM1629 945h1v1h-1zM1629 949h1v1h-1zM1629 954h1v1h-1zM1629 959h1v1h-1zM1629 964h1v1h-1zM1629 969h1v1h-1zM1629 973h1v1h-1zM1629 978h1v1h-1zM1629 982h1v1h-1zM1629 987h1v1h-1z"/><rect x="3" y="290" width="1748" height="2" fill="#787878"/><rect x="3" y="524" width="1748" height="2" fill="#787878"/><rect x="3" y="758" width="1748" height="2" fill="#787878"/><line x1="3" y1="267.5" x2="1718" y2="267.5" stroke="#c8c8c8" stroke-width="1" stroke-dasharray="5 5"/><line x1="3" y1="431.5" x2="1718" y2="431.5" stroke="#c8c8c8" stroke-width="1" stroke-dasharray="5 5"/><line x1="3" y1="735.5" x2="1718" y2="735.5" stroke="#c8c8c8" stroke-width="1" stroke-dasharray="5 5"/><line x1="3" y1="876.5" x2="1718" y2="876.5" stroke="#c8c8c8" stroke-width="1" stroke-dasharray="5 5"/><line x1="55.5" y1="96" x2="55.5" y2="993" stroke="#c8c8c8" stroke-width="1" stroke-dasharray="5 5"/><text x="1718.5" y="86" fill="#f0e62a" font-family='"Liberation Sans", sans-serif' font-size="13">4</text><rect x="1716.1" y="97" width="31.9" height="14" fill="#000"/><text x="1746" y="109.0" fill="#f0e62a" font-family='"Liberation Sans", sans-serif' font-size="13" letter-spacing="0.3" text-anchor="end">35 V</text><rect x="1716.1" y="121" width="31.9" height="14" fill="#000"/><text x="1746" y="133.0" fill="#f0e62a" font-family='"Liberation Sans", sans-serif' font-size="13" letter-spacing="0.3" text-anchor="end">30 V</text><rect x="1716.1" y="144" width="31.9" height="14" fill="#000"/><text x="1746" y="156.0" fill="#f0e62a" font-family='"Liberation Sans", sans-serif' font-size="13" letter-spacing="0.3" text-anchor="end">25 V</text><rect x="1716.1" y="167" width="31.9" height="14" fill="#000"/><text x="1746" y="179.0" fill="#f0e62a" font-family='"Liberation Sans", sans-serif' font-size="13" letter-spacing="0.3" text-anchor="end">20 V</text><rect x="1716.1" y="190" width="31.9" height="14" fill="#000"/><text x="1746" y="202.0" fill="#f0e62a" font-family='"Liberation Sans", sans-serif' font-size="13" letter-spacing="0.3" text-anchor="end">15 V</text><rect x="1716.1" y="213" width="31.9" height="14" fill="#000"/><text x="1746" y="225.0" fill="#f0e62a" font-family='"Liberation Sans", sans-serif' font-size="13" letter-spacing="0.3" text-anchor="end">10 V</text><rect x="1723.6" y="237" width="24.4" height="14" fill="#000"/><text x="1746" y="249.0" fill="#f0e62a" font-family='"Liberation Sans", sans-serif' font-size="13" letter-spacing="0.3" text-anchor="end">5 V</text><rect x="1723.6" y="260" width="24.4" height="14" fill="#000"/><text x="1746" y="272.0" fill="#f0e62a" font-family='"Liberation Sans", sans-serif' font-size="13" letter-spacing="0.3" text-anchor="end">0 V</text><rect x="1723.6" y="308" width="24.4" height="14" fill="#000"/><text x="1746" y="320.0" fill="#8cc63f" font-family='"Liberation Sans", sans-serif' font-size="13" letter-spacing="0.3" text-anchor="end">1 V</text><rect x="1697.4" y="331" width="50.6" height="14" fill="#000"/><text x="1746" y="343.0" fill="#8cc63f" font-family='"Liberation Sans", sans-serif' font-size="13" letter-spacing="0.3" text-anchor="end">800 mV</text><rect x="1697.4" y="355" width="50.6" height="14" fill="#000"/><text x="1746" y="367.0" fill="#8cc63f" font-family='"Liberation Sans", sans-serif' font-size="13" letter-spacing="0.3" text-anchor="end">600 mV</text><rect x="1697.4" y="378" width="50.6" height="14" fill="#000"/><text x="1746" y="390.0" fill="#8cc63f" font-family='"Liberation Sans", sans-serif' font-size="13" letter-spacing="0.3" text-anchor="end">400 mV</text><rect x="1697.4" y="401" width="50.6" height="14" fill="#000"/><text x="1746" y="413.0" fill="#8cc63f" font-family='"Liberation Sans", sans-serif' font-size="13" letter-spacing="0.3" text-anchor="end">200 mV</text><rect x="1723.6" y="424" width="24.4" height="14" fill="#000"/><text x="1746" y="436.0" fill="#8cc63f" font-family='"Liberation Sans", sans-serif' font-size="13" letter-spacing="0.3" text-anchor="end">0 V</text><rect x="1692.8" y="447" width="55.2" height="14" fill="#000"/><text x="1746" y="459.0" fill="#8cc63f" font-family='"Liberation Sans", sans-serif' font-size="13" letter-spacing="0.3" text-anchor="end">-200 mV</text><rect x="1692.8" y="471" width="55.2" height="14" fill="#000"/><text x="1746" y="483.0" fill="#8cc63f" font-family='"Liberation Sans", sans-serif' font-size="13" letter-spacing="0.3" text-anchor="end">-400 mV</text><rect x="1692.8" y="494" width="55.2" height="14" fill="#000"/><text x="1746" y="506.0" fill="#8cc63f" font-family='"Liberation Sans", sans-serif' font-size="13" letter-spacing="0.3" text-anchor="end">-600 mV</text><rect x="1671.6" y="542" width="76.4" height="14" fill="#000"/><text x="1746" y="554.0" fill="#e8862a" font-family='"Liberation Sans", sans-serif' font-size="13" letter-spacing="0.3" text-anchor="end">526.145 mT</text><rect x="1671.6" y="565" width="76.4" height="14" fill="#000"/><text x="1746" y="577.0" fill="#e8862a" font-family='"Liberation Sans", sans-serif' font-size="13" letter-spacing="0.3" text-anchor="end">460.377 mT</text><rect x="1671.6" y="589" width="76.4" height="14" fill="#000"/><text x="1746" y="601.0" fill="#e8862a" font-family='"Liberation Sans", sans-serif' font-size="13" letter-spacing="0.3" text-anchor="end">394.608 mT</text><rect x="1671.6" y="612" width="76.4" height="14" fill="#000"/><text x="1746" y="624.0" fill="#e8862a" font-family='"Liberation Sans", sans-serif' font-size="13" letter-spacing="0.3" text-anchor="end">328.840 mT</text><rect x="1671.6" y="635" width="76.4" height="14" fill="#000"/><text x="1746" y="647.0" fill="#e8862a" font-family='"Liberation Sans", sans-serif' font-size="13" letter-spacing="0.3" text-anchor="end">263.072 mT</text><rect x="1671.6" y="658" width="76.4" height="14" fill="#000"/><text x="1746" y="670.0" fill="#e8862a" font-family='"Liberation Sans", sans-serif' font-size="13" letter-spacing="0.3" text-anchor="end">197.304 mT</text><rect x="1671.6" y="681" width="76.4" height="14" fill="#000"/><text x="1746" y="693.0" fill="#e8862a" font-family='"Liberation Sans", sans-serif' font-size="13" letter-spacing="0.3" text-anchor="end">131.536 mT</text><rect x="1679.2" y="705" width="68.8" height="14" fill="#000"/><text x="1746" y="717.0" fill="#e8862a" font-family='"Liberation Sans", sans-serif' font-size="13" letter-spacing="0.3" text-anchor="end">65.768 mT</text><rect x="1724.6" y="728" width="23.4" height="14" fill="#000"/><text x="1746" y="740.0" fill="#e8862a" font-family='"Liberation Sans", sans-serif' font-size="13" letter-spacing="0.3" text-anchor="end">0 T</text><rect x="1682.7" y="775" width="65.3" height="14" fill="#000"/><text x="1746" y="787.0" fill="#8a3fa8" font-family='"Liberation Sans", sans-serif' font-size="13" letter-spacing="0.3" text-anchor="end">764.177 A</text><rect x="1682.7" y="799" width="65.3" height="14" fill="#000"/><text x="1746" y="811.0" fill="#8a3fa8" font-family='"Liberation Sans", sans-serif' font-size="13" letter-spacing="0.3" text-anchor="end">573.133 A</text><rect x="1682.7" y="822" width="65.3" height="14" fill="#000"/><text x="1746" y="834.0" fill="#8a3fa8" font-family='"Liberation Sans", sans-serif' font-size="13" letter-spacing="0.3" text-anchor="end">382.089 A</text><rect x="1682.7" y="845" width="65.3" height="14" fill="#000"/><text x="1746" y="857.0" fill="#8a3fa8" font-family='"Liberation Sans", sans-serif' font-size="13" letter-spacing="0.3" text-anchor="end">191.044 A</text><rect x="1724.3" y="869" width="23.7" height="14" fill="#000"/><text x="1746" y="881.0" fill="#8a3fa8" font-family='"Liberation Sans", sans-serif' font-size="13" letter-spacing="0.3" text-anchor="end">0 A</text><rect x="1678.1" y="892" width="69.9" height="14" fill="#000"/><text x="1746" y="904.0" fill="#8a3fa8" font-family='"Liberation Sans", sans-serif' font-size="13" letter-spacing="0.3" text-anchor="end">-191.044 A</text><rect x="1678.1" y="915" width="69.9" height="14" fill="#000"/><text x="1746" y="927.0" fill="#8a3fa8" font-family='"Liberation Sans", sans-serif' font-size="13" letter-spacing="0.3" text-anchor="end">-382.089 A</text><rect x="1678.1" y="938" width="69.9" height="14" fill="#000"/><text x="1746" y="950.0" fill="#8a3fa8" font-family='"Liberation Sans", sans-serif' font-size="13" letter-spacing="0.3" text-anchor="end">-573.133 A</text><rect x="1678.1" y="962" width="69.9" height="14" fill="#000"/><text x="1746" y="974.0" fill="#8a3fa8" font-family='"Liberation Sans", sans-serif' font-size="13" letter-spacing="0.3" text-anchor="end">-764.177 A</text><text x="55" y="986" fill="#c0c0c0" font-family='"Liberation Sans", sans-serif' font-size="13.5" letter-spacing="0.3" text-anchor="middle">0 s</text><text x="230" y="986" fill="#c0c0c0" font-family='"Liberation Sans", sans-serif' font-size="13.5" letter-spacing="0.3" text-anchor="middle">4 ms</text><text x="405" y="986" fill="#c0c0c0" font-family='"Liberation Sans", sans-serif' font-size="13.5" letter-spacing="0.3" text-anchor="middle">8 ms</text><text x="580" y="986" fill="#c0c0c0" font-family='"Liberation Sans", sans-serif' font-size="13.5" letter-spacing="0.3" text-anchor="middle">12 ms</text><text x="754" y="986" fill="#c0c0c0" font-family='"Liberation Sans", sans-serif' font-size="13.5" letter-spacing="0.3" text-anchor="middle">16 ms</text><text x="929" y="986" fill="#c0c0c0" font-family='"Liberation Sans", sans-serif' font-size="13.5" letter-spacing="0.3" text-anchor="middle">20 ms</text><text x="1104" y="986" fill="#c0c0c0" font-family='"Liberation Sans", sans-serif' font-size="13.5" letter-spacing="0.3" text-anchor="middle">24 ms</text><text x="1279" y="986" fill="#c0c0c0" font-family='"Liberation Sans", sans-serif' font-size="13.5" letter-spacing="0.3" text-anchor="middle">28 ms</text><text x="1454" y="986" fill="#c0c0c0" font-family='"Liberation Sans", sans-serif' font-size="13.5" letter-spacing="0.3" text-anchor="middle">32 ms</text><text x="1629" y="986" fill="#c0c0c0" font-family='"Liberation Sans", sans-serif' font-size="13.5" letter-spacing="0.3" text-anchor="middle">36 ms</text><path d="M1710 65 L1741 65 Q1744 65 1744 68 L1744 98 Z" fill="#4c4c4c"/><rect x="1745" y="77" width="1.2" height="3" fill="#f0e62a"/><circle cx="1737" cy="71.5" r="4" fill="none" stroke="#a0a0a0" stroke-width="1.5"/><line x1="1734" y1="74.5" x2="1728.5" y2="80" stroke="#a0a0a0" stroke-width="2" stroke-linecap="round"/><path d="M10 161.5 H77 L83 174.5 L77 187.5 H10 Q7 187.5 7 184.5 V164.5 Q7 161.5 10 161.5 Z" fill="#1a1806" stroke="#f0e62a" stroke-width="2"/><line x1="33" y1="161.5" x2="33" y2="187.5" stroke="#f0e62a" stroke-width="2"/><text x="19" y="177.7" fill="#f0e62a" font-family='"Liberation Sans", sans-serif' font-size="12" text-anchor="middle">C 1</text><text x="57.5" y="177.7" fill="#f0e62a" font-family='"Liberation Sans", sans-serif' font-size="12" text-anchor="middle">20 V</text><text x="102" y="179.0" fill="#f0e62a" font-family='"Liberation Sans", sans-serif' font-size="19" letter-spacing="0.35">U_loop,coil</text><path d="M10 395.5 H77 L83 408.5 L77 421.5 H10 Q7 421.5 7 418.5 V398.5 Q7 395.5 10 395.5 Z" fill="#12180a" stroke="#8cc63f" stroke-width="2"/><line x1="33" y1="395.5" x2="33" y2="421.5" stroke="#8cc63f" stroke-width="2"/><text x="19" y="411.7" fill="#8cc63f" font-family='"Liberation Sans", sans-serif' font-size="12" text-anchor="middle">C 4</text><text x="57.5" y="411.7" fill="#8cc63f" font-family='"Liberation Sans", sans-serif' font-size="12" text-anchor="middle">200 mV</text><text x="102" y="413.0" fill="#8cc63f" font-family='"Liberation Sans", sans-serif' font-size="19" letter-spacing="0.35">U_Photod</text><polyline fill="none" stroke-width="1.4" stroke-linejoin="round" stroke="#f5e62e" points="3.0,265.3 55.0,265.3 57.0,264.0 60.0,265.5 143.5,265.3 144.0,257.0 147.0,254.0 150.0,252.0 158.0,246.0 165.6,240.0 175.0,236.0 193.8,231.5 210.0,227.0 231.0,223.4 262.5,220.6 279.7,219.0 280.0,218.0 307.8,218.0 308.0,219.7 310.0,220.0 321.9,222.0 322.0,220.5 350.0,220.3 359.4,221.5 375.0,227.5 390.6,229.7 404.7,231.6 415.6,229.4 443.8,228.0 446.9,226.2 700.0,225.9 825.0,226.0 859.4,227.5 887.5,230.0 910.0,233.5 929.7,236.9 945.0,240.5 959.4,243.8 975.0,247.0 990.6,249.4 1010.0,251.2 1031.0,252.5 1106.0,254.7 1200.0,256.6 1300.0,258.3 1383.5,258.3 1384.0,256.8 1391.0,257.0 1393.0,259.5 1443.5,259.3 1444.0,257.3 1450.0,258.3 1537.0,258.5 1540.0,260.9 1751.0,261.2"/><polyline fill="none" stroke-width="1.4" stroke-linejoin="round" stroke="#8cc63f" points="3.0,430.4 347.9,429.8 358.3,429.0 362.5,426.7 370.8,417.9 378.0,407.5 385.4,396.7 391.7,392.5 396.9,391.2 550.0,390.6 654.0,391.5 700.0,392.5 756.0,393.7 809.4,396.0 856.0,399.4 898.0,403.9 929.0,408.3 942.0,412.0 955.0,416.4 976.0,422.0 999.5,426.8 1030.7,429.4 1200.0,430.2 1750.0,430.8"/><polyline fill="none" stroke-width="1.4" stroke-linejoin="round" stroke="#f08a20" points="42.0,735.0 41.9,735.3 40.5,736.0 38.8,737.0 37.6,737.8 37.7,738.3 40.1,738.1 45.5,737.1 55.0,735.0 69.1,731.5 87.3,726.8 108.6,721.3 132.2,715.1 157.0,708.6 182.2,702.1 206.7,695.9 229.7,690.3 251.6,685.1 273.6,680.0 295.5,674.9 317.5,669.9 339.5,665.1 361.5,660.3 383.5,655.6 405.5,651.0 427.5,646.5 449.5,642.1 471.5,637.8 493.5,633.6 515.5,629.4 537.4,625.4 559.4,621.5 581.3,617.7 603.2,614.0 625.0,610.4 646.8,606.9 668.6,603.6 690.4,600.3 712.2,597.1 733.9,594.0 755.7,591.0 777.4,588.1 799.2,585.2 820.9,582.5 842.6,579.8 864.3,577.2 886.0,574.8 907.7,572.5 929.5,570.3 951.3,568.3 973.2,566.4 995.1,564.7 1017.0,563.0 1039.0,561.5 1060.9,560.1 1082.8,558.8 1104.6,557.5 1126.9,556.3 1149.8,555.2 1173.0,554.2 1196.0,553.3 1218.5,552.5 1240.0,551.8 1260.2,551.2 1278.7,550.6 1295.4,550.2 1310.7,549.8 1324.7,549.6 1337.8,549.5 1350.0,549.4 1361.7,549.3 1372.9,549.3 1384.0,549.2 1393.8,549.1 1401.7,549.0 1408.5,549.0 1415.0,548.9 1422.1,548.9 1430.6,549.0 1441.3,549.2 1455.0,549.5 1472.4,550.0 1493.0,550.5 1516.0,551.2 1540.2,552.0 1564.9,552.8 1588.9,553.6 1611.5,554.4 1631.6,555.2 1650.2,556.0 1668.5,556.8 1686.2,557.7 1702.8,558.6 1718.1,559.4 1731.7,560.1 1743.1,560.7 1752.0,561.2"/><polyline fill="none" stroke-width="1.4" stroke-linejoin="round" stroke="#7a2e9a" points="3.0,879.0 40.0,879.4 143.5,883.8 144.0,874.4 144.5,906.6 145.5,890.0 146.5,903.0 147.5,889.0 148.5,900.0 149.0,889.4 150.6,886.2 151.9,889.4 153.8,886.2 155.6,887.0 155.8,897.5 156.2,888.0 157.5,891.0 159.4,888.7 163.8,889.4 164.4,896.2 167.5,899.4 171.2,896.2 173.1,891.9 176.2,890.6 184.4,890.6 200.0,889.7 227.5,889.4 260.0,890.4 279.8,891.5 280.2,901.0 288.0,901.0 288.3,884.2 288.8,897.9 307.4,898.1 308.5,889.6 314.2,892.5 322.5,894.4 323.2,882.5 328.8,883.3 329.4,894.8 330.0,887.0 338.1,888.1 350.6,888.5 354.8,886.5 360.0,881.2 364.2,876.7 366.2,873.3 366.6,872.6 368.0,876.5 372.5,866.5 373.5,870.0 374.0,864.0 377.7,861.0 388.1,850.0 396.0,841.9 402.5,832.5 410.3,829.4 412.0,834.0 443.0,819.4 446.0,826.2 446.0,826.2 448.3,825.0 451.2,823.4 454.7,821.4 458.6,819.2 462.9,816.9 467.6,814.7 472.5,812.5 477.5,810.6 482.8,808.9 488.6,807.2 494.8,805.5 501.2,803.9 507.7,802.3 514.3,800.8 521.0,799.4 527.5,798.0 534.0,796.7 540.6,795.3 547.2,794.1 553.9,792.9 560.5,791.7 567.2,790.7 573.9,789.7 580.6,788.8 587.5,787.9 594.8,787.1 602.3,786.4 609.7,785.8 616.7,785.2 623.3,784.7 629.0,784.3 633.8,784.0 637.0,783.8 638.9,783.6 639.9,783.6 640.3,783.6 640.8,783.6 641.7,783.7 643.6,783.9 646.9,784.0 651.7,784.2 657.7,784.3 664.5,784.5 671.8,784.8 679.3,785.1 686.7,785.4 693.7,785.8 700.0,786.3 705.8,786.9 711.5,787.5 717.0,788.3 722.4,789.1 727.4,789.9 732.0,790.7 736.3,791.4 740.0,792.1 743.1,792.7 745.5,793.2 747.5,793.8 749.1,794.3 750.5,794.7 752.0,795.2 753.5,795.7 755.4,796.2 757.5,796.8 759.7,797.3 762.0,797.8 764.2,798.4 766.5,798.9 768.8,799.5 771.1,800.1 773.3,800.8 775.5,801.5 777.6,802.3 779.8,803.1 781.9,804.0 784.1,804.8 786.2,805.7 788.3,806.6 790.4,807.5 792.5,808.4 794.5,809.3 796.6,810.2 798.6,811.1 800.6,812.0 802.6,813.0 804.7,814.0 806.7,815.0 808.8,816.1 810.8,817.1 812.9,818.2 815.0,819.3 817.1,820.5 819.1,821.7 821.2,822.9 823.3,824.2 825.4,825.5 827.4,826.8 829.4,828.1 831.4,829.5 833.5,830.9 835.6,832.4 837.7,834.1 840.0,835.8 842.4,837.8 845.1,839.9 847.9,842.3 850.6,844.7 853.4,847.1 856.0,849.3 858.3,851.5 860.4,853.3 862.1,854.9 863.6,856.3 864.8,857.6 865.9,858.7 866.9,859.8 867.9,860.8 868.9,861.9 870.0,862.9 871.2,863.9 872.4,865.0 873.6,865.9 874.7,866.9 875.9,867.8 877.0,868.7 878.1,869.5 879.2,870.4 880.2,871.2 881.1,872.0 882.0,872.7 882.9,873.5 883.8,874.2 884.7,875.0 885.7,875.8 886.7,876.7 887.8,877.7 889.0,878.7 890.3,879.7 891.5,880.8 892.8,882.0 894.1,883.1 895.4,884.3 896.7,885.4 898.0,886.6 899.2,887.8 900.5,889.1 901.8,890.3 903.1,891.6 904.3,892.8 905.5,893.9 906.7,895.0 907.8,896.0 908.9,896.8 909.9,897.7 910.9,898.4 911.9,899.2 912.9,900.0 913.9,900.8 915.0,901.7 916.1,902.7 917.3,903.7 918.6,904.7 919.8,905.8 921.0,906.8 922.2,907.9 923.2,909.0 924.2,910.0 925.0,911.0 925.7,912.1 926.3,913.1 926.9,914.2 927.5,915.2 928.0,916.2 928.6,917.1 929.2,917.9 929.9,918.6 930.5,919.2 931.1,919.7 931.8,920.2 932.5,920.6 933.2,921.2 934.1,921.8 935.0,922.5 936.0,923.4 937.1,924.4 938.3,925.4 939.6,926.5 940.9,927.7 942.2,928.8 943.6,929.8 945.0,930.8 946.4,931.7 947.9,932.6 949.5,933.4 951.1,934.2 952.7,935.0 954.3,935.8 955.9,936.5 957.5,937.1 959.0,937.7 960.5,938.2 962.0,938.7 963.5,939.2 965.0,939.6 966.6,940.0 968.2,940.4 970.0,940.8 971.9,941.2 973.8,941.5 975.7,941.8 977.8,942.1 979.9,942.4 982.1,942.7 984.3,943.0 986.7,943.3 988.7,943.6 990.1,943.8 991.4,944.0 992.8,944.2 994.9,944.4 997.9,944.7 1002.2,945.0 1008.3,945.4 1016.4,945.9 1026.1,946.5 1037.2,947.2 1049.2,947.9 1061.9,948.7 1074.8,949.4 1087.7,950.0 1100.0,950.6 1112.8,951.1 1126.8,951.6 1141.3,952.1 1155.7,952.5 1169.5,952.9 1181.8,953.2 1192.2,953.5 1200.0,953.8 1200.0,953.8 1275.0,955.0 1370.8,956.7 1371.0,959.0 1377.0,956.5 1384.0,958.5 1390.6,952.5 1393.8,954.6 1443.8,957.0 1445.8,964.4 1452.0,962.7 1539.6,965.4 1541.0,958.5 1550.0,962.3 1750.0,968.7"/><path d="M45 58 L65 58 L55 67 Z" fill="#f7931e"/><path d="M46 69 H64 V88 H58.5 L55 94 L51.5 88 H46 Z" fill="#000" stroke="#f7931e" stroke-width="2"/><text x="55" y="84" fill="#f7931e" font-family='"Liberation Sans", sans-serif' font-size="15" font-weight="bold" text-anchor="middle">T</text><path d="M6.5 723 H33 L42 735 L33 748 H6.5 Z" fill="#1e1208" stroke="#f28a1e" stroke-width="1.5" stroke-linejoin="round"/><text x="22" y="739.5" fill="#f28a1e" font-family='"Liberation Sans", sans-serif' font-size="12" text-anchor="middle">M 1</text><text x="53" y="741" fill="#f28a1e" font-family='"Liberation Sans", sans-serif' font-size="17">B_t</text><path d="M6 863.5 H33 L42 876 L33 889 H6 Z" fill="#6e2a8c"/><text x="22" y="880.5" fill="#fff" font-family='"Liberation Sans", sans-serif' font-size="12" text-anchor="middle">M 2</text><text x="53" y="882" fill="#7a2e9a" font-family='"Liberation Sans", sans-serif' font-size="17">I_p</text></svg><svg class="a" style="left:1755px;top:495px" width="14" height="32"><circle cx="7" cy="8.5" r="2.1" fill="#b8b8b8"/><circle cx="7" cy="17" r="2.1" fill="#b8b8b8"/><circle cx="7" cy="25.5" r="2.1" fill="#b8b8b8"/></svg><div class="a panel"></div><div class="a" style="left:1770px;top:0;width:150px;height:29px;background:#2c2c2c"></div><svg class="a" style="left:1770px;top:0" width="150" height="29"><text x="15.5" y="25.8" fill="#fff" font-family='Liberation Sans' font-weight="bold" font-size="30" textLength="29" lengthAdjust="spacingAndGlyphs">Te</text><path d="M45 4 H50 V25.8 H45 Z" fill="#fff"/><path d="M52.75 25.8 L59.9 25.8 L55.9 17.9 L52 19.5 Z" fill="#fff"/><path d="M45 25.8 L50.7 25.8 L60.9 9.2 L55.6 9.2 Z" fill="#1ec0e0"/><text x="60.5" y="25.8" fill="#fff" font-family='Liberation Sans' font-weight="bold" font-size="30" textLength="72.5" lengthAdjust="spacingAndGlyphs">tronix</text></svg><div class="a" style="left:1770px;top:30px;width:150px;text-align:center;font-size:15px;font-weight:bold;color:#e8e8e8;line-height:18px;letter-spacing:0.8px">Add New...</div><div class="btn" style="left:1778px;top:54px">Cursors</div><div class="btn" style="left:1850px;top:54px">Callout</div><div class="btn" style="left:1778px;top:100px">Measure</div><div class="btn" style="left:1850px;top:100px">Search</div><div class="btn" style="left:1778px;top:146px">Results<br>Table</div><div class="btn" style="left:1850px;top:146px">Plot</div><div class="btn" style="left:1778px;top:196px"><svg width="30" height="26"><rect x="2" y="2" width="22" height="20" fill="none" stroke="#b8b8b8" stroke-width="2" stroke-dasharray="3 2"/><circle cx="14" cy="10" r="5" fill="none" stroke="#c8c8c8" stroke-width="1.8"/><line x1="10.5" y1="13.5" x2="6" y2="18" stroke="#c8c8c8" stroke-width="2.4" stroke-linecap="round"/><path d="M19 18 L27 23 L24 23.5 L26 26 L24.5 26.5 L23 24 L21 26 Z" fill="#c8c8c8"/></svg></div><div class="btn" style="left:1850px;top:196px">More...</div><div class="sep" style="left:1773px;top:189px;width:144px"></div><div class="sep" style="left:1773px;top:241px;width:144px"></div><div class="bd" style="left:3px;width:90px;background:#cdcdcd"><div class="h" style="background:#4b4520;color:#f0e62a">Ch 1</div><div class="r">5 V/div</div><div class="r">1 M&Omega;</div><div class="r">200 kHz</div><div class="a" style="left:71.5px;top:59.5px;font-size:10px;color:#141414;line-height:10px">B<span style="font-size:9px;position:relative;top:2px;left:-1.5px">w</span></div></div><div class="bd" style="left:98px;width:90px;background:#8a8a8a"><div class="h" style="background:#228088;color:#1a2020">Ch 2</div><div class="r">250 mV/div</div><div class="r">1 M&Omega;</div><div class="r">200 kHz</div><div class="a" style="left:71.5px;top:59.5px;font-size:10px;color:#141414;line-height:10px">B<span style="font-size:9px;position:relative;top:2px;left:-1.5px">w</span></div></div><div class="bd" style="left:193px;width:90px;background:#8a8a8a"><div class="h" style="background:#8e3848;color:#c4acb0">Ch 3</div><div class="r">450 mV/div</div><div class="r">1 M&Omega;</div><div class="r">200 kHz</div><div class="a" style="left:71.5px;top:59.5px;font-size:10px;color:#141414;line-height:10px">B<span style="font-size:9px;position:relative;top:2px;left:-1.5px">w</span></div></div><div class="bd" style="left:288px;width:90px;background:#cdcdcd"><div class="h" style="background:#2f3f1f;color:#8fd43a">Ch 4</div><div class="r">200 mV/div</div><div class="r">1 M&Omega;</div><div class="r">200 kHz</div><div class="a" style="left:71.5px;top:59.5px;font-size:10px;color:#141414;line-height:10px">B<span style="font-size:9px;position:relative;top:2px;left:-1.5px">w</span></div></div><div class="bd" style="left:383px;width:90px;background:#cdcdcd"><div class="h" style="background:#47321e;color:#f7941d">Math 1</div><div class="r">65.7 mT/div</div><div class="r">Intg(Ch2)&hellip;</div></div><div class="bd" style="left:478px;width:90px;background:#cdcdcd"><div class="h" style="background:#6e2a8c;color:#ffffff">Math 2</div><div class="r">191.04 A/div</div><div class="r">-Intg(Ch3&hellip;</div></div><div class="sb" style="left:1023px"><div class="a" style="left:3px;top:7px;width:32px;height:2px;background:#f7931e"></div><div class="a" style="left:0;top:30px;width:38px;font-size:19px;line-height:26px">5</div></div><div class="sb" style="left:1068px"><div class="a" style="left:3px;top:7px;width:32px;height:2px;background:#3030d0"></div><div class="a" style="left:0;top:30px;width:38px;font-size:19px;line-height:26px">6</div></div><div class="a" style="left:1118px;top:1000px;width:1px;height:76px;background:#5a524a"></div><div class="sb" style="left:1129px"><div class="a" style="left:3px;top:7px;width:32px;height:2px;background:#b01e1e"></div><div class="a" style="left:0;top:20px;width:38px;font-size:15px;line-height:16px">Add<br>New<br>Math</div></div><div class="sb" style="left:1174px"><div class="a" style="left:3px;top:7px;width:32px;height:2px;background:#d0d0d8"></div><div class="a" style="left:0;top:20px;width:38px;font-size:15px;line-height:16px">Add<br>New<br>Ref</div></div><div class="sb" style="left:1219px"><div class="a" style="left:3px;top:7px;width:32px;height:2px;background:#b050e0"></div><div class="a" style="left:0;top:20px;width:38px;font-size:15px;line-height:16px">Add<br>New<br>Bus</div></div><div class="a" style="left:1270px;top:1000px;width:1px;height:76px;background:#5a524a"></div><div class="bd ib" style="left:1280px;width:199px;background:#cdcdcd;border:1px solid #1a1a1a"><div class="h" style="background:#595959;color:#f0f0f0;height:21px;line-height:18px;border-bottom:2px solid #8a8a8a">Horizontal</div><div style="letter-spacing:-0.1px"><div class="r" style="position:absolute;left:-1px;top:19px">4 ms/div</div><div class="r" style="position:absolute;left:105px;top:19px">40 ms</div><div class="r" style="position:absolute;left:-1px;top:38px">SR: 1 MS/s</div><div class="r" style="position:absolute;left:105px;top:38px">1 &micro;s/pt</div><div class="r" style="position:absolute;left:-1px;top:57px">RL: 40 kpts</div><div class="r" style="position:absolute;left:119px;top:57px">3%</div><svg class="a" style="left:110px;top:60px" width="10" height="12"><path d="M1 1H9V8H6.5L5 11L3.5 8H1Z" fill="#000" stroke="#f7931e" stroke-width="1.4"/><text x="5" y="7.5" fill="#f7931e" font-size="7" font-weight="bold" text-anchor="middle" font-family='Liberation Sans'>T</text></svg></div></div><div class="bd ib" style="left:1486px;width:158px;background:#cdcdcd;border:1px solid #1a1a1a"><div class="h" style="background:#595959;color:#f0f0f0;height:21px;line-height:18px;border-bottom:2px solid #8a8a8a">Trigger</div><div style="letter-spacing:-0.1px"><div class="a" style="left:3px;top:21px;width:29px;height:15px;border-radius:5px;background:#2222b8;border:1px solid #111;color:#fff;font-size:14px;line-height:13px;text-align:center">6</div><svg class="a" style="left:42px;top:22px" width="18" height="12"><path d="M1 11H4L11 2H17" fill="none" stroke="#3a3a9a" stroke-width="1.3"/></svg><div class="r" style="position:absolute;left:64px;top:18px">3 V</div></div></div><div class="bd ib" style="left:1651px;width:148px;background:#cdcdcd;border:1px solid #1a1a1a"><div class="h" style="background:#595959;color:#f0f0f0;height:21px;line-height:18px;border-bottom:2px solid #8a8a8a">Acquisition</div><div style="letter-spacing:-0.1px"><div class="r" style="position:absolute;left:-2px;top:19px">Manual,</div><div class="r" style="position:absolute;left:79px;top:19px">Analyze</div><div class="r" style="position:absolute;left:-2px;top:38px">High Res: 16 bits</div><div class="r" style="position:absolute;left:-2px;top:57px">Single: 0 /1</div></div></div><div class="a" style="left:1811px;top:1000px;width:1px;height:76px;background:#5a524a"></div><div class="a" style="left:1822px;top:1000px;width:90px;height:35px;background:#fc1e24;border:1px solid #808080;border-radius:7px;color:#fff;font-weight:bold;font-size:14px;line-height:30px;text-align:center;letter-spacing:0.3px">Preview</div><div class="a" style="left:1822px;top:1040px;width:90px;height:38px;background:#cdcdcd;border:1px solid #6a6a6a;border-radius:4px;color:#141414;font-size:15px;line-height:17px;text-align:center;padding-top:1px">16 Apr 2025<br>11:14:13 AM</div></body></html>
